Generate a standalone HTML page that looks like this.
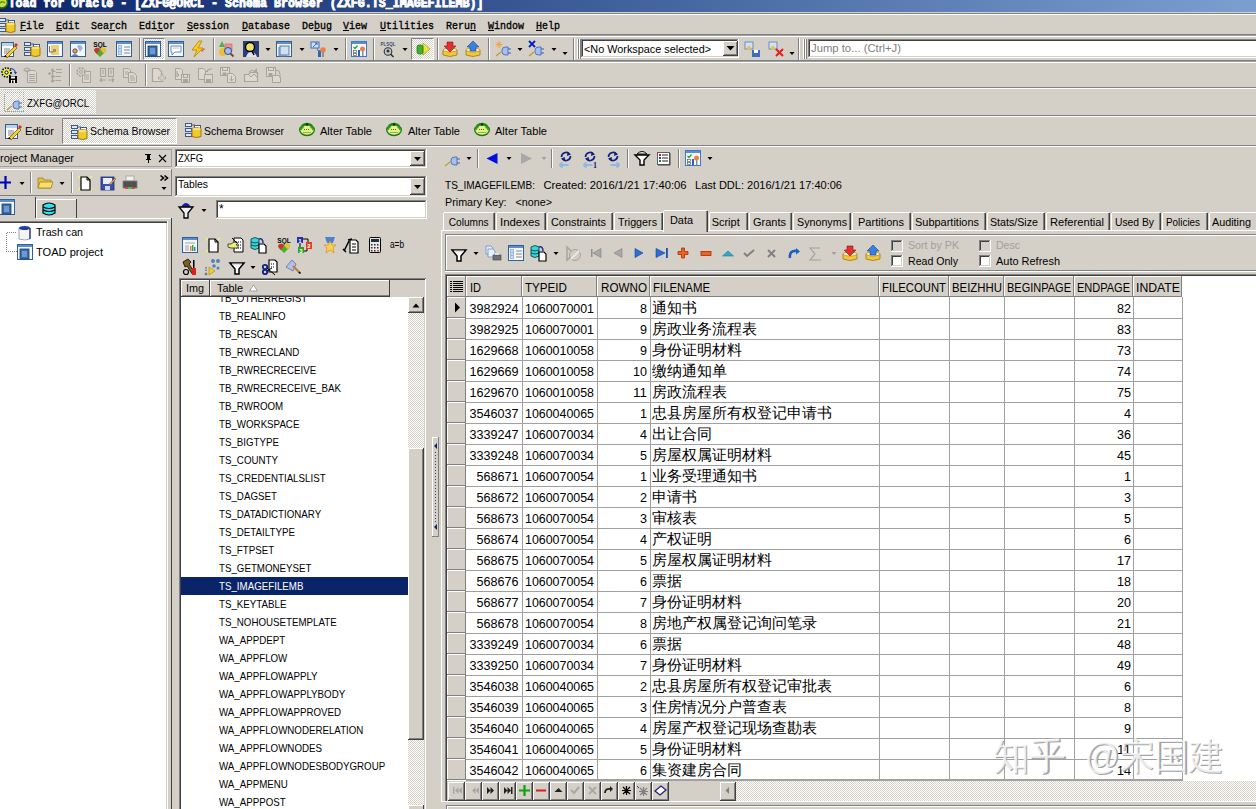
<!DOCTYPE html><html><head><meta charset="utf-8"><style>
*{box-sizing:border-box;margin:0;padding:0}
html,body{width:1256px;height:809px;overflow:hidden;background:#d4d0c8;font-family:"Liberation Sans",sans-serif;font-size:11px;color:#000}
.a{position:absolute}
.hl{position:absolute;height:1px}
.vl{position:absolute;width:1px}
.chk{background-color:#fff;background-image:linear-gradient(45deg,#d4d0c8 25%,transparent 25%,transparent 75%,#d4d0c8 75%),linear-gradient(45deg,#d4d0c8 25%,transparent 25%,transparent 75%,#d4d0c8 75%);background-size:2px 2px;background-position:0 0,1px 1px}
#ov{position:absolute;left:0;top:0}
text{font-family:"Liberation Sans",sans-serif;white-space:pre}
</style></head><body><div class="a" style="left:0px;top:0px;width:1256px;height:12px;background:linear-gradient(90deg,#0a246a 0%,#7c9fd0 100%)"></div>
<div class="a" style="left:0px;top:12px;width:1256px;height:1px;background:#d4d0c8"></div>
<div class="a" style="left:0px;top:13px;width:1256px;height:1px;background:#808080"></div>
<div class="a" style="left:0px;top:14px;width:1256px;height:1px;background:#fff"></div>
<div class="a" style="left:0px;top:34px;width:1256px;height:1px;background:#808080"></div>
<div class="a" style="left:0px;top:35px;width:1256px;height:1px;background:#a0a0a0"></div>
<div class="a" style="left:0px;top:36px;width:1256px;height:1px;background:#fff"></div>
<div class="a" style="left:20px;top:30px;width:6px;height:1px;background:#000"></div>
<div class="a" style="left:56px;top:30px;width:6px;height:1px;background:#000"></div>
<div class="a" style="left:109px;top:30px;width:6px;height:1px;background:#000"></div>
<div class="a" style="left:157px;top:30px;width:6px;height:1px;background:#000"></div>
<div class="a" style="left:187px;top:30px;width:6px;height:1px;background:#000"></div>
<div class="a" style="left:242px;top:30px;width:6px;height:1px;background:#000"></div>
<div class="a" style="left:314px;top:30px;width:6px;height:1px;background:#000"></div>
<div class="a" style="left:343px;top:30px;width:6px;height:1px;background:#000"></div>
<div class="a" style="left:380px;top:30px;width:6px;height:1px;background:#000"></div>
<div class="a" style="left:470px;top:30px;width:6px;height:1px;background:#000"></div>
<div class="a" style="left:488px;top:30px;width:6px;height:1px;background:#000"></div>
<div class="a" style="left:536px;top:30px;width:6px;height:1px;background:#000"></div>
<div class="a" style="left:0px;top:60px;width:1256px;height:1px;background:#808080"></div>
<div class="a" style="left:0px;top:61px;width:1256px;height:1px;background:#a0a0a0"></div>
<div class="a" style="left:0px;top:62px;width:1256px;height:1px;background:#fff"></div>
<div class="a" style="left:0px;top:87px;width:1256px;height:1px;background:#808080"></div>
<div class="a" style="left:0px;top:88px;width:1256px;height:1px;background:#fff"></div>
<div class="a chk" style="left:0px;top:90px;width:96px;height:24px;"></div>
<div class="a" style="left:0px;top:115px;width:1256px;height:1px;background:#808080"></div>
<div class="a" style="left:0px;top:116px;width:1256px;height:1px;background:#fff"></div>
<div class="a chk" style="left:62px;top:118px;width:115px;height:26px;border-left:1px solid #808080;border-top:1px solid #808080;border-right:1px solid #fff;border-bottom:1px solid #fff"></div>
<div class="a" style="left:0px;top:145px;width:1256px;height:1px;background:#808080"></div>
<div class="a" style="left:0px;top:146px;width:1256px;height:1px;background:#fff"></div>
<div class="a" style="left:-1px;top:149px;width:173px;height:1px;background:#a0a0a0"></div>
<div class="a" style="left:-1px;top:149px;width:1px;height:18px;background:#a0a0a0"></div>
<div class="a" style="left:-1px;top:166px;width:173px;height:1px;background:#a0a0a0"></div>
<div class="a" style="left:171px;top:149px;width:1px;height:18px;background:#a0a0a0"></div>
<div class="a" style="left:-1px;top:169px;width:173px;height:1px;background:#fff"></div>
<div class="a" style="left:-1px;top:169px;width:1px;height:27px;background:#fff"></div>
<div class="a" style="left:-1px;top:195px;width:173px;height:1px;background:#808080"></div>
<div class="a" style="left:171px;top:169px;width:1px;height:27px;background:#808080"></div>
<div class="a" style="left:30px;top:172px;width:1px;height:21px;background:#808080"></div>
<div class="a" style="left:31px;top:172px;width:1px;height:21px;background:#fff"></div>
<div class="a" style="left:71px;top:172px;width:1px;height:21px;background:#808080"></div>
<div class="a" style="left:72px;top:172px;width:1px;height:21px;background:#fff"></div>
<div class="a" style="left:0px;top:197px;width:36px;height:24px;background:#d4d0c8"></div>
<div class="a" style="left:35px;top:197px;width:1px;height:21px;background:#404040"></div>
<div class="a" style="left:36px;top:199px;width:41px;height:1px;background:#fff"></div>
<div class="a" style="left:36px;top:199px;width:1px;height:20px;background:#fff"></div>
<div class="a" style="left:36px;top:218px;width:41px;height:1px;background:#404040"></div>
<div class="a" style="left:76px;top:199px;width:1px;height:20px;background:#404040"></div>
<div class="a" style="left:36px;top:218px;width:136px;height:1px;background:#fff"></div>
<div class="a" style="left:171px;top:218px;width:1px;height:591px;background:#404040"></div>
<div class="a" style="left:0px;top:221px;width:167px;height:1px;background:#808080"></div>
<div class="a" style="left:0px;top:222px;width:167px;height:1px;background:#404040"></div>
<div class="a" style="left:0px;top:223px;width:166px;height:586px;background:#fff"></div>
<div class="a" style="left:167px;top:221px;width:1px;height:588px;background:#fff"></div>
<div class="a" style="left:175px;top:149px;width:252px;height:19px;background:#fff"></div>
<div class="a" style="left:175px;top:149px;width:252px;height:1px;background:#808080"></div>
<div class="a" style="left:175px;top:149px;width:1px;height:19px;background:#808080"></div>
<div class="a" style="left:176px;top:150px;width:250px;height:1px;background:#404040"></div>
<div class="a" style="left:176px;top:150px;width:1px;height:17px;background:#404040"></div>
<div class="a" style="left:175px;top:167px;width:252px;height:1px;background:#fff"></div>
<div class="a" style="left:426px;top:149px;width:1px;height:19px;background:#fff"></div>
<div class="a" style="left:176px;top:166px;width:250px;height:1px;background:#d4d0c8"></div>
<div class="a" style="left:425px;top:150px;width:1px;height:17px;background:#d4d0c8"></div>
<div class="a" style="left:175px;top:176px;width:252px;height:21px;background:#fff"></div>
<div class="a" style="left:175px;top:176px;width:252px;height:1px;background:#808080"></div>
<div class="a" style="left:175px;top:176px;width:1px;height:21px;background:#808080"></div>
<div class="a" style="left:176px;top:177px;width:250px;height:1px;background:#404040"></div>
<div class="a" style="left:176px;top:177px;width:1px;height:19px;background:#404040"></div>
<div class="a" style="left:175px;top:196px;width:252px;height:1px;background:#fff"></div>
<div class="a" style="left:426px;top:176px;width:1px;height:21px;background:#fff"></div>
<div class="a" style="left:176px;top:195px;width:250px;height:1px;background:#d4d0c8"></div>
<div class="a" style="left:425px;top:177px;width:1px;height:19px;background:#d4d0c8"></div>
<div class="a" style="left:410px;top:151px;width:15px;height:15px;background:#d4d0c8"></div>
<div class="a" style="left:410px;top:151px;width:15px;height:1px;background:#fff"></div>
<div class="a" style="left:410px;top:151px;width:1px;height:15px;background:#fff"></div>
<div class="a" style="left:410px;top:165px;width:15px;height:1px;background:#404040"></div>
<div class="a" style="left:424px;top:151px;width:1px;height:15px;background:#404040"></div>
<div class="a" style="left:411px;top:164px;width:13px;height:1px;background:#808080"></div>
<div class="a" style="left:423px;top:152px;width:1px;height:13px;background:#808080"></div>
<div class="a" style="left:410px;top:178px;width:15px;height:17px;background:#d4d0c8"></div>
<div class="a" style="left:410px;top:178px;width:15px;height:1px;background:#fff"></div>
<div class="a" style="left:410px;top:178px;width:1px;height:17px;background:#fff"></div>
<div class="a" style="left:410px;top:194px;width:15px;height:1px;background:#404040"></div>
<div class="a" style="left:424px;top:178px;width:1px;height:17px;background:#404040"></div>
<div class="a" style="left:411px;top:193px;width:13px;height:1px;background:#808080"></div>
<div class="a" style="left:423px;top:179px;width:1px;height:15px;background:#808080"></div>
<div class="a" style="left:216px;top:200px;width:211px;height:19px;background:#fff"></div>
<div class="a" style="left:216px;top:200px;width:211px;height:1px;background:#808080"></div>
<div class="a" style="left:216px;top:200px;width:1px;height:19px;background:#808080"></div>
<div class="a" style="left:217px;top:201px;width:209px;height:1px;background:#404040"></div>
<div class="a" style="left:217px;top:201px;width:1px;height:17px;background:#404040"></div>
<div class="a" style="left:216px;top:218px;width:211px;height:1px;background:#fff"></div>
<div class="a" style="left:426px;top:200px;width:1px;height:19px;background:#fff"></div>
<div class="a" style="left:217px;top:217px;width:209px;height:1px;background:#d4d0c8"></div>
<div class="a" style="left:425px;top:201px;width:1px;height:17px;background:#d4d0c8"></div>
<div class="a" style="left:179px;top:278px;width:247px;height:1px;background:#808080"></div>
<div class="a" style="left:179px;top:278px;width:1px;height:531px;background:#808080"></div>
<div class="a" style="left:180px;top:279px;width:1px;height:530px;background:#404040"></div>
<div class="a" style="left:180px;top:279px;width:246px;height:1px;background:#404040"></div>
<div class="a" style="left:181px;top:280px;width:245px;height:17px;background:#d4d0c8"></div>
<div class="a" style="left:181px;top:280px;width:29px;height:1px;background:#fff"></div>
<div class="a" style="left:181px;top:280px;width:1px;height:17px;background:#fff"></div>
<div class="a" style="left:181px;top:296px;width:29px;height:1px;background:#404040"></div>
<div class="a" style="left:209px;top:280px;width:1px;height:17px;background:#404040"></div>
<div class="a" style="left:182px;top:295px;width:27px;height:1px;background:#808080"></div>
<div class="a" style="left:210px;top:280px;width:180px;height:1px;background:#fff"></div>
<div class="a" style="left:210px;top:280px;width:1px;height:17px;background:#fff"></div>
<div class="a" style="left:210px;top:296px;width:180px;height:1px;background:#404040"></div>
<div class="a" style="left:389px;top:280px;width:1px;height:17px;background:#404040"></div>
<div class="a" style="left:211px;top:295px;width:178px;height:1px;background:#808080"></div>
<div class="a" style="left:181px;top:297px;width:227px;height:512px;background:#fff"></div>
<div class="a" style="left:181px;top:577px;width:227px;height:18px;background:#0a246a"></div>
<div class="a chk" style="left:408px;top:313px;width:16px;height:496px;"></div>
<div class="a" style="left:408px;top:297px;width:16px;height:16px;background:#d4d0c8"></div>
<div class="a" style="left:408px;top:297px;width:16px;height:1px;background:#fff"></div>
<div class="a" style="left:408px;top:297px;width:1px;height:16px;background:#fff"></div>
<div class="a" style="left:408px;top:312px;width:16px;height:1px;background:#404040"></div>
<div class="a" style="left:423px;top:297px;width:1px;height:16px;background:#404040"></div>
<div class="a" style="left:409px;top:311px;width:14px;height:1px;background:#808080"></div>
<div class="a" style="left:422px;top:298px;width:1px;height:14px;background:#808080"></div>
<div class="a" style="left:408px;top:448px;width:16px;height:292px;background:#d4d0c8"></div>
<div class="a" style="left:408px;top:448px;width:16px;height:1px;background:#fff"></div>
<div class="a" style="left:408px;top:448px;width:1px;height:292px;background:#fff"></div>
<div class="a" style="left:408px;top:739px;width:16px;height:1px;background:#404040"></div>
<div class="a" style="left:423px;top:448px;width:1px;height:292px;background:#404040"></div>
<div class="a" style="left:409px;top:738px;width:14px;height:1px;background:#808080"></div>
<div class="a" style="left:422px;top:449px;width:1px;height:290px;background:#808080"></div>
<div class="a" style="left:425px;top:279px;width:1px;height:530px;background:#fff"></div>
<div class="a" style="left:432px;top:437px;width:7px;height:1px;background:#fff"></div>
<div class="a" style="left:432px;top:437px;width:1px;height:100px;background:#fff"></div>
<div class="a" style="left:432px;top:536px;width:7px;height:1px;background:#808080"></div>
<div class="a" style="left:438px;top:437px;width:1px;height:100px;background:#808080"></div>
<div class="a" style="left:477px;top:149px;width:1px;height:19px;background:#808080"></div>
<div class="a" style="left:478px;top:149px;width:1px;height:19px;background:#fff"></div>
<div class="a" style="left:551px;top:149px;width:1px;height:19px;background:#808080"></div>
<div class="a" style="left:552px;top:149px;width:1px;height:19px;background:#fff"></div>
<div class="a" style="left:627px;top:149px;width:1px;height:19px;background:#808080"></div>
<div class="a" style="left:628px;top:149px;width:1px;height:19px;background:#fff"></div>
<div class="a" style="left:678px;top:149px;width:1px;height:19px;background:#808080"></div>
<div class="a" style="left:679px;top:149px;width:1px;height:19px;background:#fff"></div>
<div class="a" style="left:444px;top:212px;width:50px;height:1px;background:#fff"></div>
<div class="a" style="left:443px;top:213px;width:1px;height:17px;background:#fff"></div>
<div class="a" style="left:494px;top:213px;width:1px;height:17px;background:#404040"></div>
<div class="a" style="left:493px;top:213px;width:1px;height:17px;background:#808080"></div>
<div class="a" style="left:497px;top:212px;width:48px;height:1px;background:#fff"></div>
<div class="a" style="left:496px;top:213px;width:1px;height:17px;background:#fff"></div>
<div class="a" style="left:545px;top:213px;width:1px;height:17px;background:#404040"></div>
<div class="a" style="left:544px;top:213px;width:1px;height:17px;background:#808080"></div>
<div class="a" style="left:548px;top:212px;width:64px;height:1px;background:#fff"></div>
<div class="a" style="left:547px;top:213px;width:1px;height:17px;background:#fff"></div>
<div class="a" style="left:612px;top:213px;width:1px;height:17px;background:#404040"></div>
<div class="a" style="left:611px;top:213px;width:1px;height:17px;background:#808080"></div>
<div class="a" style="left:615px;top:212px;width:47px;height:1px;background:#fff"></div>
<div class="a" style="left:614px;top:213px;width:1px;height:17px;background:#fff"></div>
<div class="a" style="left:662px;top:213px;width:1px;height:17px;background:#404040"></div>
<div class="a" style="left:661px;top:213px;width:1px;height:17px;background:#808080"></div>
<div class="a" style="left:663px;top:210px;width:45px;height:22px;background:#d4d0c8"></div>
<div class="a" style="left:664px;top:210px;width:43px;height:1px;background:#fff"></div>
<div class="a" style="left:663px;top:211px;width:1px;height:21px;background:#fff"></div>
<div class="a" style="left:707px;top:211px;width:1px;height:21px;background:#404040"></div>
<div class="a" style="left:706px;top:211px;width:1px;height:21px;background:#808080"></div>
<div class="a" style="left:710px;top:212px;width:37px;height:1px;background:#fff"></div>
<div class="a" style="left:709px;top:213px;width:1px;height:17px;background:#fff"></div>
<div class="a" style="left:747px;top:213px;width:1px;height:17px;background:#404040"></div>
<div class="a" style="left:746px;top:213px;width:1px;height:17px;background:#808080"></div>
<div class="a" style="left:750px;top:212px;width:41px;height:1px;background:#fff"></div>
<div class="a" style="left:749px;top:213px;width:1px;height:17px;background:#fff"></div>
<div class="a" style="left:791px;top:213px;width:1px;height:17px;background:#404040"></div>
<div class="a" style="left:790px;top:213px;width:1px;height:17px;background:#808080"></div>
<div class="a" style="left:794px;top:212px;width:56px;height:1px;background:#fff"></div>
<div class="a" style="left:793px;top:213px;width:1px;height:17px;background:#fff"></div>
<div class="a" style="left:850px;top:213px;width:1px;height:17px;background:#404040"></div>
<div class="a" style="left:849px;top:213px;width:1px;height:17px;background:#808080"></div>
<div class="a" style="left:853px;top:212px;width:57px;height:1px;background:#fff"></div>
<div class="a" style="left:852px;top:213px;width:1px;height:17px;background:#fff"></div>
<div class="a" style="left:910px;top:213px;width:1px;height:17px;background:#404040"></div>
<div class="a" style="left:909px;top:213px;width:1px;height:17px;background:#808080"></div>
<div class="a" style="left:913px;top:212px;width:72px;height:1px;background:#fff"></div>
<div class="a" style="left:912px;top:213px;width:1px;height:17px;background:#fff"></div>
<div class="a" style="left:985px;top:213px;width:1px;height:17px;background:#404040"></div>
<div class="a" style="left:984px;top:213px;width:1px;height:17px;background:#808080"></div>
<div class="a" style="left:988px;top:212px;width:56px;height:1px;background:#fff"></div>
<div class="a" style="left:987px;top:213px;width:1px;height:17px;background:#fff"></div>
<div class="a" style="left:1044px;top:213px;width:1px;height:17px;background:#404040"></div>
<div class="a" style="left:1043px;top:213px;width:1px;height:17px;background:#808080"></div>
<div class="a" style="left:1047px;top:212px;width:62px;height:1px;background:#fff"></div>
<div class="a" style="left:1046px;top:213px;width:1px;height:17px;background:#fff"></div>
<div class="a" style="left:1109px;top:213px;width:1px;height:17px;background:#404040"></div>
<div class="a" style="left:1108px;top:213px;width:1px;height:17px;background:#808080"></div>
<div class="a" style="left:1112px;top:212px;width:48px;height:1px;background:#fff"></div>
<div class="a" style="left:1111px;top:213px;width:1px;height:17px;background:#fff"></div>
<div class="a" style="left:1160px;top:213px;width:1px;height:17px;background:#404040"></div>
<div class="a" style="left:1159px;top:213px;width:1px;height:17px;background:#808080"></div>
<div class="a" style="left:1163px;top:212px;width:44px;height:1px;background:#fff"></div>
<div class="a" style="left:1162px;top:213px;width:1px;height:17px;background:#fff"></div>
<div class="a" style="left:1207px;top:213px;width:1px;height:17px;background:#404040"></div>
<div class="a" style="left:1206px;top:213px;width:1px;height:17px;background:#808080"></div>
<div class="a" style="left:1210px;top:212px;width:46px;height:1px;background:#fff"></div>
<div class="a" style="left:1209px;top:213px;width:1px;height:17px;background:#fff"></div>
<div class="a" style="left:441px;top:230px;width:222px;height:1px;background:#fff"></div>
<div class="a" style="left:708px;top:230px;width:548px;height:1px;background:#fff"></div>
<div class="a" style="left:441px;top:230px;width:1px;height:579px;background:#fff"></div>
<div class="a" style="left:445px;top:234px;width:811px;height:1px;background:#808080"></div>
<div class="a" style="left:445px;top:234px;width:1px;height:37px;background:#808080"></div>
<div class="a" style="left:446px;top:235px;width:810px;height:1px;background:#fff"></div>
<div class="a" style="left:446px;top:235px;width:1px;height:36px;background:#fff"></div>
<div class="a" style="left:445px;top:271px;width:811px;height:1px;background:#fff"></div>
<div class="a" style="left:445px;top:270px;width:811px;height:1px;background:#808080"></div>
<div class="a" style="left:891px;top:240px;width:12px;height:12px;background:#d4d0c8"></div>
<div class="a" style="left:891px;top:240px;width:12px;height:1px;background:#808080"></div>
<div class="a" style="left:891px;top:240px;width:1px;height:12px;background:#808080"></div>
<div class="a" style="left:892px;top:241px;width:10px;height:1px;background:#404040"></div>
<div class="a" style="left:892px;top:241px;width:1px;height:10px;background:#404040"></div>
<div class="a" style="left:891px;top:251px;width:12px;height:1px;background:#fff"></div>
<div class="a" style="left:902px;top:240px;width:1px;height:12px;background:#fff"></div>
<div class="a" style="left:892px;top:250px;width:10px;height:1px;background:#d4d0c8"></div>
<div class="a" style="left:901px;top:241px;width:1px;height:10px;background:#d4d0c8"></div>
<div class="a" style="left:891px;top:255px;width:12px;height:12px;background:#fff"></div>
<div class="a" style="left:891px;top:255px;width:12px;height:1px;background:#808080"></div>
<div class="a" style="left:891px;top:255px;width:1px;height:12px;background:#808080"></div>
<div class="a" style="left:892px;top:256px;width:10px;height:1px;background:#404040"></div>
<div class="a" style="left:892px;top:256px;width:1px;height:10px;background:#404040"></div>
<div class="a" style="left:891px;top:266px;width:12px;height:1px;background:#fff"></div>
<div class="a" style="left:902px;top:255px;width:1px;height:12px;background:#fff"></div>
<div class="a" style="left:892px;top:265px;width:10px;height:1px;background:#d4d0c8"></div>
<div class="a" style="left:901px;top:256px;width:1px;height:10px;background:#d4d0c8"></div>
<div class="a" style="left:979px;top:240px;width:12px;height:12px;background:#d4d0c8"></div>
<div class="a" style="left:979px;top:240px;width:12px;height:1px;background:#808080"></div>
<div class="a" style="left:979px;top:240px;width:1px;height:12px;background:#808080"></div>
<div class="a" style="left:980px;top:241px;width:10px;height:1px;background:#404040"></div>
<div class="a" style="left:980px;top:241px;width:1px;height:10px;background:#404040"></div>
<div class="a" style="left:979px;top:251px;width:12px;height:1px;background:#fff"></div>
<div class="a" style="left:990px;top:240px;width:1px;height:12px;background:#fff"></div>
<div class="a" style="left:980px;top:250px;width:10px;height:1px;background:#d4d0c8"></div>
<div class="a" style="left:989px;top:241px;width:1px;height:10px;background:#d4d0c8"></div>
<div class="a" style="left:979px;top:255px;width:12px;height:12px;background:#fff"></div>
<div class="a" style="left:979px;top:255px;width:12px;height:1px;background:#808080"></div>
<div class="a" style="left:979px;top:255px;width:1px;height:12px;background:#808080"></div>
<div class="a" style="left:980px;top:256px;width:10px;height:1px;background:#404040"></div>
<div class="a" style="left:980px;top:256px;width:1px;height:10px;background:#404040"></div>
<div class="a" style="left:979px;top:266px;width:12px;height:1px;background:#fff"></div>
<div class="a" style="left:990px;top:255px;width:1px;height:12px;background:#fff"></div>
<div class="a" style="left:980px;top:265px;width:10px;height:1px;background:#d4d0c8"></div>
<div class="a" style="left:989px;top:256px;width:1px;height:10px;background:#d4d0c8"></div>
<div class="a" style="left:445px;top:274px;width:811px;height:1px;background:#808080"></div>
<div class="a" style="left:445px;top:274px;width:1px;height:535px;background:#808080"></div>
<div class="a" style="left:446px;top:275px;width:810px;height:1px;background:#404040"></div>
<div class="a" style="left:446px;top:275px;width:1px;height:534px;background:#404040"></div>
<div class="a" style="left:447px;top:276px;width:809px;height:505px;background:#fff"></div>
<div class="a" style="left:447px;top:276px;width:735px;height:21px;background:#d4d0c8"></div>
<div class="a" style="left:447px;top:276px;width:19px;height:1px;background:#fff"></div>
<div class="a" style="left:447px;top:276px;width:1px;height:21px;background:#fff"></div>
<div class="a" style="left:447px;top:296px;width:19px;height:1px;background:#808080"></div>
<div class="a" style="left:465px;top:276px;width:1px;height:21px;background:#808080"></div>
<div class="a" style="left:466px;top:276px;width:56px;height:1px;background:#fff"></div>
<div class="a" style="left:466px;top:276px;width:1px;height:21px;background:#fff"></div>
<div class="a" style="left:466px;top:296px;width:56px;height:1px;background:#808080"></div>
<div class="a" style="left:521px;top:276px;width:1px;height:21px;background:#808080"></div>
<div class="a" style="left:522px;top:276px;width:75px;height:1px;background:#fff"></div>
<div class="a" style="left:522px;top:276px;width:1px;height:21px;background:#fff"></div>
<div class="a" style="left:522px;top:296px;width:75px;height:1px;background:#808080"></div>
<div class="a" style="left:596px;top:276px;width:1px;height:21px;background:#808080"></div>
<div class="a" style="left:597px;top:276px;width:53px;height:1px;background:#fff"></div>
<div class="a" style="left:597px;top:276px;width:1px;height:21px;background:#fff"></div>
<div class="a" style="left:597px;top:296px;width:53px;height:1px;background:#808080"></div>
<div class="a" style="left:649px;top:276px;width:1px;height:21px;background:#808080"></div>
<div class="a" style="left:650px;top:276px;width:229px;height:1px;background:#fff"></div>
<div class="a" style="left:650px;top:276px;width:1px;height:21px;background:#fff"></div>
<div class="a" style="left:650px;top:296px;width:229px;height:1px;background:#808080"></div>
<div class="a" style="left:878px;top:276px;width:1px;height:21px;background:#808080"></div>
<div class="a" style="left:879px;top:276px;width:70px;height:1px;background:#fff"></div>
<div class="a" style="left:879px;top:276px;width:1px;height:21px;background:#fff"></div>
<div class="a" style="left:879px;top:296px;width:70px;height:1px;background:#808080"></div>
<div class="a" style="left:948px;top:276px;width:1px;height:21px;background:#808080"></div>
<div class="a" style="left:949px;top:276px;width:55px;height:1px;background:#fff"></div>
<div class="a" style="left:949px;top:276px;width:1px;height:21px;background:#fff"></div>
<div class="a" style="left:949px;top:296px;width:55px;height:1px;background:#808080"></div>
<div class="a" style="left:1003px;top:276px;width:1px;height:21px;background:#808080"></div>
<div class="a" style="left:1004px;top:276px;width:70px;height:1px;background:#fff"></div>
<div class="a" style="left:1004px;top:276px;width:1px;height:21px;background:#fff"></div>
<div class="a" style="left:1004px;top:296px;width:70px;height:1px;background:#808080"></div>
<div class="a" style="left:1073px;top:276px;width:1px;height:21px;background:#808080"></div>
<div class="a" style="left:1074px;top:276px;width:59px;height:1px;background:#fff"></div>
<div class="a" style="left:1074px;top:276px;width:1px;height:21px;background:#fff"></div>
<div class="a" style="left:1074px;top:296px;width:59px;height:1px;background:#808080"></div>
<div class="a" style="left:1132px;top:276px;width:1px;height:21px;background:#808080"></div>
<div class="a" style="left:1133px;top:276px;width:49px;height:1px;background:#fff"></div>
<div class="a" style="left:1133px;top:276px;width:1px;height:21px;background:#fff"></div>
<div class="a" style="left:1133px;top:296px;width:49px;height:1px;background:#808080"></div>
<div class="a" style="left:1181px;top:276px;width:1px;height:21px;background:#808080"></div>
<div class="a" style="left:447px;top:297px;width:19px;height:21px;background:#d4d0c8"></div>
<div class="a" style="left:447px;top:297px;width:19px;height:1px;background:#fff"></div>
<div class="a" style="left:447px;top:297px;width:1px;height:21px;background:#fff"></div>
<div class="a" style="left:447px;top:317px;width:19px;height:1px;background:#808080"></div>
<div class="a" style="left:465px;top:297px;width:1px;height:21px;background:#808080"></div>
<div class="a" style="left:447px;top:318px;width:19px;height:21px;background:#d4d0c8"></div>
<div class="a" style="left:447px;top:318px;width:19px;height:1px;background:#fff"></div>
<div class="a" style="left:447px;top:318px;width:1px;height:21px;background:#fff"></div>
<div class="a" style="left:447px;top:338px;width:19px;height:1px;background:#808080"></div>
<div class="a" style="left:465px;top:318px;width:1px;height:21px;background:#808080"></div>
<div class="a" style="left:447px;top:339px;width:19px;height:21px;background:#d4d0c8"></div>
<div class="a" style="left:447px;top:339px;width:19px;height:1px;background:#fff"></div>
<div class="a" style="left:447px;top:339px;width:1px;height:21px;background:#fff"></div>
<div class="a" style="left:447px;top:359px;width:19px;height:1px;background:#808080"></div>
<div class="a" style="left:465px;top:339px;width:1px;height:21px;background:#808080"></div>
<div class="a" style="left:447px;top:360px;width:19px;height:21px;background:#d4d0c8"></div>
<div class="a" style="left:447px;top:360px;width:19px;height:1px;background:#fff"></div>
<div class="a" style="left:447px;top:360px;width:1px;height:21px;background:#fff"></div>
<div class="a" style="left:447px;top:380px;width:19px;height:1px;background:#808080"></div>
<div class="a" style="left:465px;top:360px;width:1px;height:21px;background:#808080"></div>
<div class="a" style="left:447px;top:381px;width:19px;height:21px;background:#d4d0c8"></div>
<div class="a" style="left:447px;top:381px;width:19px;height:1px;background:#fff"></div>
<div class="a" style="left:447px;top:381px;width:1px;height:21px;background:#fff"></div>
<div class="a" style="left:447px;top:401px;width:19px;height:1px;background:#808080"></div>
<div class="a" style="left:465px;top:381px;width:1px;height:21px;background:#808080"></div>
<div class="a" style="left:447px;top:402px;width:19px;height:21px;background:#d4d0c8"></div>
<div class="a" style="left:447px;top:402px;width:19px;height:1px;background:#fff"></div>
<div class="a" style="left:447px;top:402px;width:1px;height:21px;background:#fff"></div>
<div class="a" style="left:447px;top:422px;width:19px;height:1px;background:#808080"></div>
<div class="a" style="left:465px;top:402px;width:1px;height:21px;background:#808080"></div>
<div class="a" style="left:447px;top:423px;width:19px;height:21px;background:#d4d0c8"></div>
<div class="a" style="left:447px;top:423px;width:19px;height:1px;background:#fff"></div>
<div class="a" style="left:447px;top:423px;width:1px;height:21px;background:#fff"></div>
<div class="a" style="left:447px;top:443px;width:19px;height:1px;background:#808080"></div>
<div class="a" style="left:465px;top:423px;width:1px;height:21px;background:#808080"></div>
<div class="a" style="left:447px;top:444px;width:19px;height:21px;background:#d4d0c8"></div>
<div class="a" style="left:447px;top:444px;width:19px;height:1px;background:#fff"></div>
<div class="a" style="left:447px;top:444px;width:1px;height:21px;background:#fff"></div>
<div class="a" style="left:447px;top:464px;width:19px;height:1px;background:#808080"></div>
<div class="a" style="left:465px;top:444px;width:1px;height:21px;background:#808080"></div>
<div class="a" style="left:447px;top:465px;width:19px;height:21px;background:#d4d0c8"></div>
<div class="a" style="left:447px;top:465px;width:19px;height:1px;background:#fff"></div>
<div class="a" style="left:447px;top:465px;width:1px;height:21px;background:#fff"></div>
<div class="a" style="left:447px;top:485px;width:19px;height:1px;background:#808080"></div>
<div class="a" style="left:465px;top:465px;width:1px;height:21px;background:#808080"></div>
<div class="a" style="left:447px;top:486px;width:19px;height:21px;background:#d4d0c8"></div>
<div class="a" style="left:447px;top:486px;width:19px;height:1px;background:#fff"></div>
<div class="a" style="left:447px;top:486px;width:1px;height:21px;background:#fff"></div>
<div class="a" style="left:447px;top:506px;width:19px;height:1px;background:#808080"></div>
<div class="a" style="left:465px;top:486px;width:1px;height:21px;background:#808080"></div>
<div class="a" style="left:447px;top:507px;width:19px;height:21px;background:#d4d0c8"></div>
<div class="a" style="left:447px;top:507px;width:19px;height:1px;background:#fff"></div>
<div class="a" style="left:447px;top:507px;width:1px;height:21px;background:#fff"></div>
<div class="a" style="left:447px;top:527px;width:19px;height:1px;background:#808080"></div>
<div class="a" style="left:465px;top:507px;width:1px;height:21px;background:#808080"></div>
<div class="a" style="left:447px;top:528px;width:19px;height:21px;background:#d4d0c8"></div>
<div class="a" style="left:447px;top:528px;width:19px;height:1px;background:#fff"></div>
<div class="a" style="left:447px;top:528px;width:1px;height:21px;background:#fff"></div>
<div class="a" style="left:447px;top:548px;width:19px;height:1px;background:#808080"></div>
<div class="a" style="left:465px;top:528px;width:1px;height:21px;background:#808080"></div>
<div class="a" style="left:447px;top:549px;width:19px;height:21px;background:#d4d0c8"></div>
<div class="a" style="left:447px;top:549px;width:19px;height:1px;background:#fff"></div>
<div class="a" style="left:447px;top:549px;width:1px;height:21px;background:#fff"></div>
<div class="a" style="left:447px;top:569px;width:19px;height:1px;background:#808080"></div>
<div class="a" style="left:465px;top:549px;width:1px;height:21px;background:#808080"></div>
<div class="a" style="left:447px;top:570px;width:19px;height:21px;background:#d4d0c8"></div>
<div class="a" style="left:447px;top:570px;width:19px;height:1px;background:#fff"></div>
<div class="a" style="left:447px;top:570px;width:1px;height:21px;background:#fff"></div>
<div class="a" style="left:447px;top:590px;width:19px;height:1px;background:#808080"></div>
<div class="a" style="left:465px;top:570px;width:1px;height:21px;background:#808080"></div>
<div class="a" style="left:447px;top:591px;width:19px;height:21px;background:#d4d0c8"></div>
<div class="a" style="left:447px;top:591px;width:19px;height:1px;background:#fff"></div>
<div class="a" style="left:447px;top:591px;width:1px;height:21px;background:#fff"></div>
<div class="a" style="left:447px;top:611px;width:19px;height:1px;background:#808080"></div>
<div class="a" style="left:465px;top:591px;width:1px;height:21px;background:#808080"></div>
<div class="a" style="left:447px;top:612px;width:19px;height:21px;background:#d4d0c8"></div>
<div class="a" style="left:447px;top:612px;width:19px;height:1px;background:#fff"></div>
<div class="a" style="left:447px;top:612px;width:1px;height:21px;background:#fff"></div>
<div class="a" style="left:447px;top:632px;width:19px;height:1px;background:#808080"></div>
<div class="a" style="left:465px;top:612px;width:1px;height:21px;background:#808080"></div>
<div class="a" style="left:447px;top:633px;width:19px;height:21px;background:#d4d0c8"></div>
<div class="a" style="left:447px;top:633px;width:19px;height:1px;background:#fff"></div>
<div class="a" style="left:447px;top:633px;width:1px;height:21px;background:#fff"></div>
<div class="a" style="left:447px;top:653px;width:19px;height:1px;background:#808080"></div>
<div class="a" style="left:465px;top:633px;width:1px;height:21px;background:#808080"></div>
<div class="a" style="left:447px;top:654px;width:19px;height:21px;background:#d4d0c8"></div>
<div class="a" style="left:447px;top:654px;width:19px;height:1px;background:#fff"></div>
<div class="a" style="left:447px;top:654px;width:1px;height:21px;background:#fff"></div>
<div class="a" style="left:447px;top:674px;width:19px;height:1px;background:#808080"></div>
<div class="a" style="left:465px;top:654px;width:1px;height:21px;background:#808080"></div>
<div class="a" style="left:447px;top:675px;width:19px;height:21px;background:#d4d0c8"></div>
<div class="a" style="left:447px;top:675px;width:19px;height:1px;background:#fff"></div>
<div class="a" style="left:447px;top:675px;width:1px;height:21px;background:#fff"></div>
<div class="a" style="left:447px;top:695px;width:19px;height:1px;background:#808080"></div>
<div class="a" style="left:465px;top:675px;width:1px;height:21px;background:#808080"></div>
<div class="a" style="left:447px;top:696px;width:19px;height:21px;background:#d4d0c8"></div>
<div class="a" style="left:447px;top:696px;width:19px;height:1px;background:#fff"></div>
<div class="a" style="left:447px;top:696px;width:1px;height:21px;background:#fff"></div>
<div class="a" style="left:447px;top:716px;width:19px;height:1px;background:#808080"></div>
<div class="a" style="left:465px;top:696px;width:1px;height:21px;background:#808080"></div>
<div class="a" style="left:447px;top:717px;width:19px;height:21px;background:#d4d0c8"></div>
<div class="a" style="left:447px;top:717px;width:19px;height:1px;background:#fff"></div>
<div class="a" style="left:447px;top:717px;width:1px;height:21px;background:#fff"></div>
<div class="a" style="left:447px;top:737px;width:19px;height:1px;background:#808080"></div>
<div class="a" style="left:465px;top:717px;width:1px;height:21px;background:#808080"></div>
<div class="a" style="left:447px;top:738px;width:19px;height:21px;background:#d4d0c8"></div>
<div class="a" style="left:447px;top:738px;width:19px;height:1px;background:#fff"></div>
<div class="a" style="left:447px;top:738px;width:1px;height:21px;background:#fff"></div>
<div class="a" style="left:447px;top:758px;width:19px;height:1px;background:#808080"></div>
<div class="a" style="left:465px;top:738px;width:1px;height:21px;background:#808080"></div>
<div class="a" style="left:447px;top:759px;width:19px;height:21px;background:#d4d0c8"></div>
<div class="a" style="left:447px;top:759px;width:19px;height:1px;background:#fff"></div>
<div class="a" style="left:447px;top:759px;width:1px;height:21px;background:#fff"></div>
<div class="a" style="left:447px;top:779px;width:19px;height:1px;background:#808080"></div>
<div class="a" style="left:465px;top:759px;width:1px;height:21px;background:#808080"></div>
<div class="a" style="left:466px;top:318px;width:716px;height:1px;background:#a0a0a0"></div>
<div class="a" style="left:466px;top:339px;width:716px;height:1px;background:#a0a0a0"></div>
<div class="a" style="left:466px;top:360px;width:716px;height:1px;background:#a0a0a0"></div>
<div class="a" style="left:466px;top:381px;width:716px;height:1px;background:#a0a0a0"></div>
<div class="a" style="left:466px;top:402px;width:716px;height:1px;background:#a0a0a0"></div>
<div class="a" style="left:466px;top:423px;width:716px;height:1px;background:#a0a0a0"></div>
<div class="a" style="left:466px;top:444px;width:716px;height:1px;background:#a0a0a0"></div>
<div class="a" style="left:466px;top:465px;width:716px;height:1px;background:#a0a0a0"></div>
<div class="a" style="left:466px;top:486px;width:716px;height:1px;background:#a0a0a0"></div>
<div class="a" style="left:466px;top:507px;width:716px;height:1px;background:#a0a0a0"></div>
<div class="a" style="left:466px;top:528px;width:716px;height:1px;background:#a0a0a0"></div>
<div class="a" style="left:466px;top:549px;width:716px;height:1px;background:#a0a0a0"></div>
<div class="a" style="left:466px;top:570px;width:716px;height:1px;background:#a0a0a0"></div>
<div class="a" style="left:466px;top:591px;width:716px;height:1px;background:#a0a0a0"></div>
<div class="a" style="left:466px;top:612px;width:716px;height:1px;background:#a0a0a0"></div>
<div class="a" style="left:466px;top:633px;width:716px;height:1px;background:#a0a0a0"></div>
<div class="a" style="left:466px;top:654px;width:716px;height:1px;background:#a0a0a0"></div>
<div class="a" style="left:466px;top:675px;width:716px;height:1px;background:#a0a0a0"></div>
<div class="a" style="left:466px;top:696px;width:716px;height:1px;background:#a0a0a0"></div>
<div class="a" style="left:466px;top:717px;width:716px;height:1px;background:#a0a0a0"></div>
<div class="a" style="left:466px;top:738px;width:716px;height:1px;background:#a0a0a0"></div>
<div class="a" style="left:466px;top:759px;width:716px;height:1px;background:#a0a0a0"></div>
<div class="a" style="left:466px;top:780px;width:716px;height:1px;background:#a0a0a0"></div>
<div class="a" style="left:522px;top:297px;width:1px;height:484px;background:#a0a0a0"></div>
<div class="a" style="left:597px;top:297px;width:1px;height:484px;background:#a0a0a0"></div>
<div class="a" style="left:650px;top:297px;width:1px;height:484px;background:#a0a0a0"></div>
<div class="a" style="left:879px;top:297px;width:1px;height:484px;background:#a0a0a0"></div>
<div class="a" style="left:949px;top:297px;width:1px;height:484px;background:#a0a0a0"></div>
<div class="a" style="left:1004px;top:297px;width:1px;height:484px;background:#a0a0a0"></div>
<div class="a" style="left:1074px;top:297px;width:1px;height:484px;background:#a0a0a0"></div>
<div class="a" style="left:1133px;top:297px;width:1px;height:484px;background:#a0a0a0"></div>
<div class="a" style="left:1182px;top:297px;width:1px;height:484px;background:#a0a0a0"></div>
<div class="a" style="left:466px;top:779px;width:716px;height:1px;background:#a0a0a0"></div>
<div class="a" style="left:408px;top:805px;width:16px;height:4px;background:#d4d0c8"></div>
<div class="a" style="left:408px;top:805px;width:16px;height:1px;background:#fff"></div>
<div class="a" style="left:408px;top:805px;width:1px;height:4px;background:#fff"></div>
<div class="a" style="left:423px;top:805px;width:1px;height:4px;background:#404040"></div>
<div class="a" style="left:447px;top:781px;width:809px;height:20px;background:#d4d0c8"></div>
<div class="a" style="left:448px;top:782px;width:17px;height:1px;background:#fff"></div>
<div class="a" style="left:448px;top:782px;width:1px;height:19px;background:#fff"></div>
<div class="a" style="left:448px;top:800px;width:17px;height:1px;background:#404040"></div>
<div class="a" style="left:464px;top:782px;width:1px;height:19px;background:#404040"></div>
<div class="a" style="left:449px;top:799px;width:15px;height:1px;background:#808080"></div>
<div class="a" style="left:463px;top:783px;width:1px;height:16px;background:#808080"></div>
<div class="a" style="left:465px;top:782px;width:17px;height:1px;background:#fff"></div>
<div class="a" style="left:465px;top:782px;width:1px;height:19px;background:#fff"></div>
<div class="a" style="left:465px;top:800px;width:17px;height:1px;background:#404040"></div>
<div class="a" style="left:481px;top:782px;width:1px;height:19px;background:#404040"></div>
<div class="a" style="left:466px;top:799px;width:15px;height:1px;background:#808080"></div>
<div class="a" style="left:480px;top:783px;width:1px;height:16px;background:#808080"></div>
<div class="a" style="left:482px;top:782px;width:17px;height:1px;background:#fff"></div>
<div class="a" style="left:482px;top:782px;width:1px;height:19px;background:#fff"></div>
<div class="a" style="left:482px;top:800px;width:17px;height:1px;background:#404040"></div>
<div class="a" style="left:498px;top:782px;width:1px;height:19px;background:#404040"></div>
<div class="a" style="left:483px;top:799px;width:15px;height:1px;background:#808080"></div>
<div class="a" style="left:497px;top:783px;width:1px;height:16px;background:#808080"></div>
<div class="a" style="left:499px;top:782px;width:17px;height:1px;background:#fff"></div>
<div class="a" style="left:499px;top:782px;width:1px;height:19px;background:#fff"></div>
<div class="a" style="left:499px;top:800px;width:17px;height:1px;background:#404040"></div>
<div class="a" style="left:515px;top:782px;width:1px;height:19px;background:#404040"></div>
<div class="a" style="left:500px;top:799px;width:15px;height:1px;background:#808080"></div>
<div class="a" style="left:514px;top:783px;width:1px;height:16px;background:#808080"></div>
<div class="a" style="left:516px;top:782px;width:17px;height:1px;background:#fff"></div>
<div class="a" style="left:516px;top:782px;width:1px;height:19px;background:#fff"></div>
<div class="a" style="left:516px;top:800px;width:17px;height:1px;background:#404040"></div>
<div class="a" style="left:532px;top:782px;width:1px;height:19px;background:#404040"></div>
<div class="a" style="left:517px;top:799px;width:15px;height:1px;background:#808080"></div>
<div class="a" style="left:531px;top:783px;width:1px;height:16px;background:#808080"></div>
<div class="a" style="left:533px;top:782px;width:17px;height:1px;background:#fff"></div>
<div class="a" style="left:533px;top:782px;width:1px;height:19px;background:#fff"></div>
<div class="a" style="left:533px;top:800px;width:17px;height:1px;background:#404040"></div>
<div class="a" style="left:549px;top:782px;width:1px;height:19px;background:#404040"></div>
<div class="a" style="left:534px;top:799px;width:15px;height:1px;background:#808080"></div>
<div class="a" style="left:548px;top:783px;width:1px;height:16px;background:#808080"></div>
<div class="a" style="left:550px;top:782px;width:17px;height:1px;background:#fff"></div>
<div class="a" style="left:550px;top:782px;width:1px;height:19px;background:#fff"></div>
<div class="a" style="left:550px;top:800px;width:17px;height:1px;background:#404040"></div>
<div class="a" style="left:566px;top:782px;width:1px;height:19px;background:#404040"></div>
<div class="a" style="left:551px;top:799px;width:15px;height:1px;background:#808080"></div>
<div class="a" style="left:565px;top:783px;width:1px;height:16px;background:#808080"></div>
<div class="a" style="left:567px;top:782px;width:17px;height:1px;background:#fff"></div>
<div class="a" style="left:567px;top:782px;width:1px;height:19px;background:#fff"></div>
<div class="a" style="left:567px;top:800px;width:17px;height:1px;background:#404040"></div>
<div class="a" style="left:583px;top:782px;width:1px;height:19px;background:#404040"></div>
<div class="a" style="left:568px;top:799px;width:15px;height:1px;background:#808080"></div>
<div class="a" style="left:582px;top:783px;width:1px;height:16px;background:#808080"></div>
<div class="a" style="left:584px;top:782px;width:17px;height:1px;background:#fff"></div>
<div class="a" style="left:584px;top:782px;width:1px;height:19px;background:#fff"></div>
<div class="a" style="left:584px;top:800px;width:17px;height:1px;background:#404040"></div>
<div class="a" style="left:600px;top:782px;width:1px;height:19px;background:#404040"></div>
<div class="a" style="left:585px;top:799px;width:15px;height:1px;background:#808080"></div>
<div class="a" style="left:599px;top:783px;width:1px;height:16px;background:#808080"></div>
<div class="a" style="left:601px;top:782px;width:17px;height:1px;background:#fff"></div>
<div class="a" style="left:601px;top:782px;width:1px;height:19px;background:#fff"></div>
<div class="a" style="left:601px;top:800px;width:17px;height:1px;background:#404040"></div>
<div class="a" style="left:617px;top:782px;width:1px;height:19px;background:#404040"></div>
<div class="a" style="left:602px;top:799px;width:15px;height:1px;background:#808080"></div>
<div class="a" style="left:616px;top:783px;width:1px;height:16px;background:#808080"></div>
<div class="a" style="left:618px;top:782px;width:17px;height:1px;background:#fff"></div>
<div class="a" style="left:618px;top:782px;width:1px;height:19px;background:#fff"></div>
<div class="a" style="left:618px;top:800px;width:17px;height:1px;background:#404040"></div>
<div class="a" style="left:634px;top:782px;width:1px;height:19px;background:#404040"></div>
<div class="a" style="left:619px;top:799px;width:15px;height:1px;background:#808080"></div>
<div class="a" style="left:633px;top:783px;width:1px;height:16px;background:#808080"></div>
<div class="a" style="left:635px;top:782px;width:17px;height:1px;background:#fff"></div>
<div class="a" style="left:635px;top:782px;width:1px;height:19px;background:#fff"></div>
<div class="a" style="left:635px;top:800px;width:17px;height:1px;background:#404040"></div>
<div class="a" style="left:651px;top:782px;width:1px;height:19px;background:#404040"></div>
<div class="a" style="left:636px;top:799px;width:15px;height:1px;background:#808080"></div>
<div class="a" style="left:650px;top:783px;width:1px;height:16px;background:#808080"></div>
<div class="a" style="left:652px;top:782px;width:17px;height:1px;background:#fff"></div>
<div class="a" style="left:652px;top:782px;width:1px;height:19px;background:#fff"></div>
<div class="a" style="left:652px;top:800px;width:17px;height:1px;background:#404040"></div>
<div class="a" style="left:668px;top:782px;width:1px;height:19px;background:#404040"></div>
<div class="a" style="left:653px;top:799px;width:15px;height:1px;background:#808080"></div>
<div class="a" style="left:667px;top:783px;width:1px;height:16px;background:#808080"></div>
<div class="a" style="left:720px;top:782px;width:16px;height:1px;background:#fff"></div>
<div class="a" style="left:720px;top:782px;width:1px;height:19px;background:#fff"></div>
<div class="a" style="left:720px;top:800px;width:16px;height:1px;background:#404040"></div>
<div class="a" style="left:735px;top:782px;width:1px;height:19px;background:#404040"></div>
<div class="a" style="left:721px;top:799px;width:14px;height:1px;background:#808080"></div>
<div class="a" style="left:734px;top:783px;width:1px;height:16px;background:#808080"></div>
<div class="a chk" style="left:736px;top:781px;width:520px;height:20px;"></div>
<div class="a" style="left:441px;top:801px;width:815px;height:8px;background:#d4d0c8"></div>
<div class="a" style="left:441px;top:801px;width:815px;height:1px;background:#fff"></div>
<div class="a" style="left:446px;top:805px;width:810px;height:1px;background:#808080"></div>
<div class="a" style="left:446px;top:805px;width:1px;height:4px;background:#808080"></div>
<div class="a" style="left:447px;top:806px;width:1px;height:3px;background:#fff"></div>
<div class="a" style="left:447px;top:806px;width:809px;height:1px;background:#fff"></div>
<div class="a" style="left:139px;top:38px;width:1px;height:22px;background:#808080"></div>
<div class="a" style="left:140px;top:38px;width:1px;height:22px;background:#fff"></div>
<div class="a" style="left:213px;top:38px;width:1px;height:22px;background:#808080"></div>
<div class="a" style="left:214px;top:38px;width:1px;height:22px;background:#fff"></div>
<div class="a" style="left:345px;top:38px;width:1px;height:22px;background:#808080"></div>
<div class="a" style="left:346px;top:38px;width:1px;height:22px;background:#fff"></div>
<div class="a" style="left:373px;top:38px;width:1px;height:22px;background:#808080"></div>
<div class="a" style="left:374px;top:38px;width:1px;height:22px;background:#fff"></div>
<div class="a" style="left:437px;top:38px;width:1px;height:22px;background:#808080"></div>
<div class="a" style="left:438px;top:38px;width:1px;height:22px;background:#fff"></div>
<div class="a" style="left:488px;top:38px;width:1px;height:22px;background:#808080"></div>
<div class="a" style="left:489px;top:38px;width:1px;height:22px;background:#fff"></div>
<div class="a" style="left:573px;top:38px;width:1px;height:22px;background:#808080"></div>
<div class="a" style="left:574px;top:38px;width:1px;height:22px;background:#fff"></div>
<div class="a" style="left:798px;top:38px;width:1px;height:22px;background:#808080"></div>
<div class="a" style="left:799px;top:38px;width:1px;height:22px;background:#fff"></div>
<div class="a chk" style="left:143px;top:38px;width:22px;height:22px;border-top:1px solid #808080;border-left:1px solid #808080;border-bottom:1px solid #fff;border-right:1px solid #fff"></div>
<div class="a chk" style="left:411px;top:38px;width:23px;height:22px;border-top:1px solid #808080;border-left:1px solid #808080;border-bottom:1px solid #fff;border-right:1px solid #fff"></div>
<div class="a" style="left:69px;top:64px;width:1px;height:22px;background:#808080"></div>
<div class="a" style="left:70px;top:64px;width:1px;height:22px;background:#fff"></div>
<div class="a" style="left:145px;top:64px;width:1px;height:22px;background:#808080"></div>
<div class="a" style="left:146px;top:64px;width:1px;height:22px;background:#fff"></div>
<div class="a" style="left:573px;top:38px;width:1px;height:22px;background:#808080"></div>
<div class="a" style="left:574px;top:38px;width:1px;height:22px;background:#fff"></div>
<div class="a" style="left:577px;top:39px;width:1px;height:20px;background:#fff"></div>
<div class="a" style="left:578px;top:39px;width:1px;height:20px;background:#808080"></div>
<div class="a" style="left:579px;top:39px;width:1px;height:20px;background:#fff"></div>
<div class="a" style="left:580px;top:39px;width:1px;height:20px;background:#808080"></div>
<div class="a" style="left:581px;top:39px;width:158px;height:19px;background:#fff"></div>
<div class="a" style="left:581px;top:39px;width:158px;height:1px;background:#808080"></div>
<div class="a" style="left:581px;top:39px;width:1px;height:19px;background:#808080"></div>
<div class="a" style="left:582px;top:40px;width:156px;height:1px;background:#404040"></div>
<div class="a" style="left:582px;top:40px;width:1px;height:17px;background:#404040"></div>
<div class="a" style="left:581px;top:57px;width:158px;height:1px;background:#fff"></div>
<div class="a" style="left:738px;top:39px;width:1px;height:19px;background:#fff"></div>
<div class="a" style="left:582px;top:56px;width:156px;height:1px;background:#d4d0c8"></div>
<div class="a" style="left:737px;top:40px;width:1px;height:17px;background:#d4d0c8"></div>
<div class="a" style="left:723px;top:41px;width:15px;height:15px;background:#d4d0c8"></div>
<div class="a" style="left:723px;top:41px;width:15px;height:1px;background:#fff"></div>
<div class="a" style="left:723px;top:41px;width:1px;height:15px;background:#fff"></div>
<div class="a" style="left:723px;top:55px;width:15px;height:1px;background:#404040"></div>
<div class="a" style="left:737px;top:41px;width:1px;height:15px;background:#404040"></div>
<div class="a" style="left:724px;top:54px;width:13px;height:1px;background:#808080"></div>
<div class="a" style="left:736px;top:42px;width:1px;height:13px;background:#808080"></div>
<div class="a" style="left:803px;top:39px;width:1px;height:20px;background:#fff"></div>
<div class="a" style="left:804px;top:39px;width:1px;height:20px;background:#808080"></div>
<div class="a" style="left:805px;top:39px;width:1px;height:20px;background:#fff"></div>
<div class="a" style="left:806px;top:39px;width:1px;height:20px;background:#808080"></div>
<div class="a" style="left:808px;top:39px;width:452px;height:19px;background:#fff"></div>
<div class="a" style="left:808px;top:39px;width:452px;height:1px;background:#808080"></div>
<div class="a" style="left:808px;top:39px;width:1px;height:19px;background:#808080"></div>
<div class="a" style="left:809px;top:40px;width:450px;height:1px;background:#404040"></div>
<div class="a" style="left:809px;top:40px;width:1px;height:17px;background:#404040"></div>
<div class="a" style="left:808px;top:57px;width:452px;height:1px;background:#fff"></div>
<div class="a" style="left:1259px;top:39px;width:1px;height:19px;background:#fff"></div>
<div class="a" style="left:809px;top:56px;width:450px;height:1px;background:#d4d0c8"></div>
<div class="a" style="left:1258px;top:40px;width:1px;height:17px;background:#d4d0c8"></div><svg id="ov" width="1256" height="809" viewBox="0 0 1256 809"><circle cx="2" cy="2.5" r="5.5" fill="#c8e040" stroke="#2a6a1a" stroke-width="1.5"/><path d="M-1 4q3-4 6-1" stroke="#5a9a1a" stroke-width="1.5" fill="none"/>
<text x="8.5" y="7" font-size="12" fill="#fff" font-weight="bold" style="font-family:'Liberation Mono'" textLength="475" lengthAdjust="spacingAndGlyphs" stroke="#fff" stroke-width="0.9">Toad for Oracle - [ZXFG@ORCL - Schema Browser (ZXFG.TS_IMAGEFILEMB)]</text>
<text x="20" y="29" font-size="11.5" fill="#000" font-weight="normal" style="font-family:'Liberation Mono'" textLength="24" lengthAdjust="spacingAndGlyphs" stroke="#000" stroke-width="0.35">File</text>
<text x="56" y="29" font-size="11.5" fill="#000" font-weight="normal" style="font-family:'Liberation Mono'" textLength="24" lengthAdjust="spacingAndGlyphs" stroke="#000" stroke-width="0.35">Edit</text>
<text x="91" y="29" font-size="11.5" fill="#000" font-weight="normal" style="font-family:'Liberation Mono'" textLength="36" lengthAdjust="spacingAndGlyphs" stroke="#000" stroke-width="0.35">Search</text>
<text x="139" y="29" font-size="11.5" fill="#000" font-weight="normal" style="font-family:'Liberation Mono'" textLength="36" lengthAdjust="spacingAndGlyphs" stroke="#000" stroke-width="0.35">Editor</text>
<text x="187" y="29" font-size="11.5" fill="#000" font-weight="normal" style="font-family:'Liberation Mono'" textLength="42" lengthAdjust="spacingAndGlyphs" stroke="#000" stroke-width="0.35">Session</text>
<text x="242" y="29" font-size="11.5" fill="#000" font-weight="normal" style="font-family:'Liberation Mono'" textLength="48" lengthAdjust="spacingAndGlyphs" stroke="#000" stroke-width="0.35">Database</text>
<text x="302" y="29" font-size="11.5" fill="#000" font-weight="normal" style="font-family:'Liberation Mono'" textLength="30" lengthAdjust="spacingAndGlyphs" stroke="#000" stroke-width="0.35">Debug</text>
<text x="343" y="29" font-size="11.5" fill="#000" font-weight="normal" style="font-family:'Liberation Mono'" textLength="24" lengthAdjust="spacingAndGlyphs" stroke="#000" stroke-width="0.35">View</text>
<text x="380" y="29" font-size="11.5" fill="#000" font-weight="normal" style="font-family:'Liberation Mono'" textLength="54" lengthAdjust="spacingAndGlyphs" stroke="#000" stroke-width="0.35">Utilities</text>
<text x="446" y="29" font-size="11.5" fill="#000" font-weight="normal" style="font-family:'Liberation Mono'" textLength="30" lengthAdjust="spacingAndGlyphs" stroke="#000" stroke-width="0.35">Rerun</text>
<text x="488" y="29" font-size="11.5" fill="#000" font-weight="normal" style="font-family:'Liberation Mono'" textLength="36" lengthAdjust="spacingAndGlyphs" stroke="#000" stroke-width="0.35">Window</text>
<text x="536" y="29" font-size="11.5" fill="#000" font-weight="normal" style="font-family:'Liberation Mono'" textLength="24" lengthAdjust="spacingAndGlyphs" stroke="#000" stroke-width="0.35">Help</text>
<text x="27" y="107" font-size="11" fill="#000" font-weight="normal" style="font-family:'Liberation Sans'" textLength="62" lengthAdjust="spacingAndGlyphs" >ZXFG@ORCL</text>
<text x="25" y="135" font-size="11" fill="#000" font-weight="normal" style="font-family:'Liberation Sans'" textLength="29" lengthAdjust="spacingAndGlyphs" >Editor</text>
<text x="90" y="135" font-size="11" fill="#000" font-weight="normal" style="font-family:'Liberation Sans'" textLength="80" lengthAdjust="spacingAndGlyphs" >Schema Browser</text>
<text x="204" y="135" font-size="11" fill="#000" font-weight="normal" style="font-family:'Liberation Sans'" textLength="80" lengthAdjust="spacingAndGlyphs" >Schema Browser</text>
<text x="320" y="135" font-size="11" fill="#000" font-weight="normal" style="font-family:'Liberation Sans'" textLength="52" lengthAdjust="spacingAndGlyphs" >Alter Table</text>
<text x="408" y="135" font-size="11" fill="#000" font-weight="normal" style="font-family:'Liberation Sans'" textLength="52" lengthAdjust="spacingAndGlyphs" >Alter Table</text>
<text x="495" y="135" font-size="11" fill="#000" font-weight="normal" style="font-family:'Liberation Sans'" textLength="52" lengthAdjust="spacingAndGlyphs" >Alter Table</text>
<text x="0" y="162" font-size="11" fill="#000" font-weight="normal" style="font-family:'Liberation Sans'" textLength="74" lengthAdjust="spacingAndGlyphs" >roject Manager</text>
<path d="M145 154h6v1h-1v4h1v1h-2v3h-1v-3h-2v-1h1v-4h-2z" fill="#000"/>
<path d="M159 155l7 7M166 155l-7 7" stroke="#000" stroke-width="1.1"/>
<path d="M160.5 175.5l3 2.5-3 2.5M164.5 175.5l3 2.5-3 2.5" stroke="#000" fill="none" stroke-width="1.6"/>
<path d="M161.5 187h5l-2.5 3z" fill="#000"/>
<path d="M19.5 182h5l-2.5 3z" fill="#000"/>
<path d="M59.5 182h5l-2.5 3z" fill="#000"/>
<text x="36" y="236" font-size="11" fill="#000" font-weight="normal" style="font-family:'Liberation Sans'" textLength="47" lengthAdjust="spacingAndGlyphs" >Trash can</text>
<text x="36" y="256" font-size="11" fill="#000" font-weight="normal" style="font-family:'Liberation Sans'" textLength="67" lengthAdjust="spacingAndGlyphs" >TOAD project</text>
<path d="M6.5 232.5h9M6.5 232.5v19h10" stroke="#808080" stroke-dasharray="1 1" fill="none" shape-rendering="crispEdges"/>
<text x="178" y="162" font-size="11" fill="#000" font-weight="normal" style="font-family:'Liberation Sans'" textLength="25" lengthAdjust="spacingAndGlyphs" >ZXFG</text>
<text x="178" y="188" font-size="11" fill="#000" font-weight="normal" style="font-family:'Liberation Sans'" textLength="30" lengthAdjust="spacingAndGlyphs" >Tables</text>
<path d="M414 157h7l-3.5 4z" fill="#000"/>
<path d="M414 185h7l-3.5 4z" fill="#000"/>
<text x="219" y="213" font-size="12" fill="#000" font-weight="normal" style="font-family:'Liberation Sans'" >*</text>
<path d="M201.5 209h5l-2.5 3z" fill="#000"/>
<text x="186" y="292" font-size="11" fill="#000" font-weight="normal" style="font-family:'Liberation Sans'" textLength="18" lengthAdjust="spacingAndGlyphs" >Img</text>
<text x="217" y="292" font-size="11" fill="#000" font-weight="normal" style="font-family:'Liberation Sans'" textLength="26" lengthAdjust="spacingAndGlyphs" >Table</text>
<path d="M253.5 285l4 6h-8z" fill="#fff" stroke="#a0a0a0" stroke-width="1"/>
<clipPath id="lc"><rect x="181" y="297" width="227" height="512"/></clipPath><g clip-path="url(#lc)">
<text x="219" y="302" font-size="11" fill="#000" font-weight="normal" style="font-family:'Liberation Sans'" textLength="88.2" lengthAdjust="spacingAndGlyphs" >TB_OTHERREGIST</text>
<text x="219" y="320" font-size="11" fill="#000" font-weight="normal" style="font-family:'Liberation Sans'" textLength="66.5" lengthAdjust="spacingAndGlyphs" >TB_REALINFO</text>
<text x="219" y="338" font-size="11" fill="#000" font-weight="normal" style="font-family:'Liberation Sans'" textLength="58.4" lengthAdjust="spacingAndGlyphs" >TB_RESCAN</text>
<text x="219" y="356" font-size="11" fill="#000" font-weight="normal" style="font-family:'Liberation Sans'" textLength="80.4" lengthAdjust="spacingAndGlyphs" >TB_RWRECLAND</text>
<text x="219" y="374" font-size="11" fill="#000" font-weight="normal" style="font-family:'Liberation Sans'" textLength="97.2" lengthAdjust="spacingAndGlyphs" >TB_RWRECRECEIVE</text>
<text x="219" y="392" font-size="11" fill="#000" font-weight="normal" style="font-family:'Liberation Sans'" textLength="122.1" lengthAdjust="spacingAndGlyphs" >TB_RWRECRECEIVE_BAK</text>
<text x="219" y="410" font-size="11" fill="#000" font-weight="normal" style="font-family:'Liberation Sans'" textLength="64.2" lengthAdjust="spacingAndGlyphs" >TB_RWROOM</text>
<text x="219" y="428" font-size="11" fill="#000" font-weight="normal" style="font-family:'Liberation Sans'" textLength="80.4" lengthAdjust="spacingAndGlyphs" >TB_WORKSPACE</text>
<text x="219" y="446" font-size="11" fill="#000" font-weight="normal" style="font-family:'Liberation Sans'" textLength="60.0" lengthAdjust="spacingAndGlyphs" >TS_BIGTYPE</text>
<text x="219" y="464" font-size="11" fill="#000" font-weight="normal" style="font-family:'Liberation Sans'" textLength="59.0" lengthAdjust="spacingAndGlyphs" >TS_COUNTY</text>
<text x="219" y="482" font-size="11" fill="#000" font-weight="normal" style="font-family:'Liberation Sans'" textLength="106.6" lengthAdjust="spacingAndGlyphs" >TS_CREDENTIALSLIST</text>
<text x="219" y="500" font-size="11" fill="#000" font-weight="normal" style="font-family:'Liberation Sans'" textLength="57.9" lengthAdjust="spacingAndGlyphs" >TS_DAGSET</text>
<text x="219" y="518" font-size="11" fill="#000" font-weight="normal" style="font-family:'Liberation Sans'" textLength="102.2" lengthAdjust="spacingAndGlyphs" >TS_DATADICTIONARY</text>
<text x="219" y="536" font-size="11" fill="#000" font-weight="normal" style="font-family:'Liberation Sans'" textLength="75.9" lengthAdjust="spacingAndGlyphs" >TS_DETAILTYPE</text>
<text x="219" y="554" font-size="11" fill="#000" font-weight="normal" style="font-family:'Liberation Sans'" textLength="55.2" lengthAdjust="spacingAndGlyphs" >TS_FTPSET</text>
<text x="219" y="572" font-size="11" fill="#000" font-weight="normal" style="font-family:'Liberation Sans'" textLength="92.5" lengthAdjust="spacingAndGlyphs" >TS_GETMONEYSET</text>
<text x="219" y="590" font-size="11" fill="#fff" font-weight="normal" style="font-family:'Liberation Sans'" textLength="84.4" lengthAdjust="spacingAndGlyphs" >TS_IMAGEFILEMB</text>
<text x="219" y="608" font-size="11" fill="#000" font-weight="normal" style="font-family:'Liberation Sans'" textLength="67.5" lengthAdjust="spacingAndGlyphs" >TS_KEYTABLE</text>
<text x="219" y="626" font-size="11" fill="#000" font-weight="normal" style="font-family:'Liberation Sans'" textLength="117.7" lengthAdjust="spacingAndGlyphs" >TS_NOHOUSETEMPLATE</text>
<text x="219" y="644" font-size="11" fill="#000" font-weight="normal" style="font-family:'Liberation Sans'" textLength="66.2" lengthAdjust="spacingAndGlyphs" >WA_APPDEPT</text>
<text x="219" y="662" font-size="11" fill="#000" font-weight="normal" style="font-family:'Liberation Sans'" textLength="68.3" lengthAdjust="spacingAndGlyphs" >WA_APPFLOW</text>
<text x="219" y="680" font-size="11" fill="#000" font-weight="normal" style="font-family:'Liberation Sans'" textLength="98.6" lengthAdjust="spacingAndGlyphs" >WA_APPFLOWAPPLY</text>
<text x="219" y="698" font-size="11" fill="#000" font-weight="normal" style="font-family:'Liberation Sans'" textLength="126.2" lengthAdjust="spacingAndGlyphs" >WA_APPFLOWAPPLYBODY</text>
<text x="219" y="716" font-size="11" fill="#000" font-weight="normal" style="font-family:'Liberation Sans'" textLength="122.1" lengthAdjust="spacingAndGlyphs" >WA_APPFLOWAPPROVED</text>
<text x="219" y="734" font-size="11" fill="#000" font-weight="normal" style="font-family:'Liberation Sans'" textLength="144.4" lengthAdjust="spacingAndGlyphs" >WA_APPFLOWNODERELATION</text>
<text x="219" y="752" font-size="11" fill="#000" font-weight="normal" style="font-family:'Liberation Sans'" textLength="103.0" lengthAdjust="spacingAndGlyphs" >WA_APPFLOWNODES</text>
<text x="219" y="770" font-size="11" fill="#000" font-weight="normal" style="font-family:'Liberation Sans'" textLength="166.2" lengthAdjust="spacingAndGlyphs" >WA_APPFLOWNODESBODYGROUP</text>
<text x="219" y="788" font-size="11" fill="#000" font-weight="normal" style="font-family:'Liberation Sans'" textLength="68.9" lengthAdjust="spacingAndGlyphs" >WA_APPMENU</text>
<text x="219" y="806" font-size="11" fill="#000" font-weight="normal" style="font-family:'Liberation Sans'" textLength="66.7" lengthAdjust="spacingAndGlyphs" >WA_APPPOST</text>
</g>
<path d="M412.5 307.5h7l-3.5-4z" fill="#000"/>
<path d="M437 443v6l-3-3z" fill="#0a246a"/><path d="M437 524v6l-3-3z" fill="#0a246a"/>
<path d="M435.5 452v70" stroke="#404080" stroke-dasharray="1 2" stroke-width="1"/>
<path d="M466.5 157h5l-2.5 3z" fill="#000"/>
<path d="M506.5 157h5l-2.5 3z" fill="#000"/>
<path d="M541.5 157h5l-2.5 3z" fill="#a0a0a0"/>
<path d="M707.5 157h5l-2.5 3z" fill="#000"/>
<text x="445" y="189" font-size="11" fill="#000" font-weight="normal" style="font-family:'Liberation Sans'" textLength="90" lengthAdjust="spacingAndGlyphs" >TS_IMAGEFILEMB:</text>
<text x="543.5" y="189" font-size="11" fill="#000" font-weight="normal" style="font-family:'Liberation Sans'" textLength="143" lengthAdjust="spacingAndGlyphs" >Created: 2016/1/21 17:40:06</text>
<text x="695" y="189" font-size="11" fill="#000" font-weight="normal" style="font-family:'Liberation Sans'" textLength="147" lengthAdjust="spacingAndGlyphs" >Last DDL: 2016/1/21 17:40:06</text>
<text x="445" y="206" font-size="11" fill="#000" font-weight="normal" style="font-family:'Liberation Sans'" textLength="107" lengthAdjust="spacingAndGlyphs" >Primary Key:   &lt;none&gt;</text>
<text x="448.7" y="226" font-size="11" fill="#000" font-weight="normal" style="font-family:'Liberation Sans'" textLength="40" lengthAdjust="spacingAndGlyphs" >Columns</text>
<text x="500" y="226" font-size="11" fill="#000" font-weight="normal" style="font-family:'Liberation Sans'" textLength="40" lengthAdjust="spacingAndGlyphs" >Indexes</text>
<text x="551" y="226" font-size="11" fill="#000" font-weight="normal" style="font-family:'Liberation Sans'" textLength="55" lengthAdjust="spacingAndGlyphs" >Constraints</text>
<text x="618" y="226" font-size="11" fill="#000" font-weight="normal" style="font-family:'Liberation Sans'" textLength="39" lengthAdjust="spacingAndGlyphs" >Triggers</text>
<text x="670" y="224" font-size="11" fill="#000" font-weight="normal" style="font-family:'Liberation Sans'" textLength="23" lengthAdjust="spacingAndGlyphs" >Data</text>
<text x="711.7" y="226" font-size="11" fill="#000" font-weight="normal" style="font-family:'Liberation Sans'" textLength="28" lengthAdjust="spacingAndGlyphs" >Script</text>
<text x="753" y="226" font-size="11" fill="#000" font-weight="normal" style="font-family:'Liberation Sans'" textLength="33" lengthAdjust="spacingAndGlyphs" >Grants</text>
<text x="797" y="226" font-size="11" fill="#000" font-weight="normal" style="font-family:'Liberation Sans'" textLength="50" lengthAdjust="spacingAndGlyphs" >Synonyms</text>
<text x="858" y="226" font-size="11" fill="#000" font-weight="normal" style="font-family:'Liberation Sans'" textLength="46" lengthAdjust="spacingAndGlyphs" >Partitions</text>
<text x="915" y="226" font-size="11" fill="#000" font-weight="normal" style="font-family:'Liberation Sans'" textLength="64" lengthAdjust="spacingAndGlyphs" >Subpartitions</text>
<text x="990" y="226" font-size="11" fill="#000" font-weight="normal" style="font-family:'Liberation Sans'" textLength="48" lengthAdjust="spacingAndGlyphs" >Stats/Size</text>
<text x="1050" y="226" font-size="11" fill="#000" font-weight="normal" style="font-family:'Liberation Sans'" textLength="54" lengthAdjust="spacingAndGlyphs" >Referential</text>
<text x="1115" y="226" font-size="11" fill="#000" font-weight="normal" style="font-family:'Liberation Sans'" textLength="39" lengthAdjust="spacingAndGlyphs" >Used By</text>
<text x="1166" y="226" font-size="11" fill="#000" font-weight="normal" style="font-family:'Liberation Sans'" textLength="34" lengthAdjust="spacingAndGlyphs" >Policies</text>
<text x="1212" y="226" font-size="11" fill="#000" font-weight="normal" style="font-family:'Liberation Sans'" textLength="39" lengthAdjust="spacingAndGlyphs" >Auditing</text>
<path d="M473.5 252h5l-2.5 3z" fill="#000"/>
<path d="M553.5 252h5l-2.5 3z" fill="#000"/>
<path d="M831.5 252h5l-2.5 3z" fill="#a0a0a0"/>
<text x="908" y="249" font-size="11" fill="#a0a0a0" font-weight="normal" style="font-family:'Liberation Sans'" textLength="51" lengthAdjust="spacingAndGlyphs" >Sort by PK</text>
<text x="996" y="249" font-size="11" fill="#a0a0a0" font-weight="normal" style="font-family:'Liberation Sans'" textLength="24" lengthAdjust="spacingAndGlyphs" >Desc</text>
<text x="908" y="265" font-size="11" fill="#000" font-weight="normal" style="font-family:'Liberation Sans'" textLength="50" lengthAdjust="spacingAndGlyphs" >Read Only</text>
<text x="996" y="265" font-size="11" fill="#000" font-weight="normal" style="font-family:'Liberation Sans'" textLength="64" lengthAdjust="spacingAndGlyphs" >Auto Refresh</text>
<text x="470" y="292" font-size="12" fill="#000" font-weight="normal" style="font-family:'Liberation Sans'" textLength="11" lengthAdjust="spacingAndGlyphs" >ID</text>
<text x="525" y="292" font-size="12" fill="#000" font-weight="normal" style="font-family:'Liberation Sans'" textLength="42" lengthAdjust="spacingAndGlyphs" >TYPEID</text>
<text x="601" y="292" font-size="12" fill="#000" font-weight="normal" style="font-family:'Liberation Sans'" textLength="46" lengthAdjust="spacingAndGlyphs" >ROWNO</text>
<text x="653" y="292" font-size="12" fill="#000" font-weight="normal" style="font-family:'Liberation Sans'" textLength="57" lengthAdjust="spacingAndGlyphs" >FILENAME</text>
<text x="882" y="292" font-size="12" fill="#000" font-weight="normal" style="font-family:'Liberation Sans'" textLength="64" lengthAdjust="spacingAndGlyphs" >FILECOUNT</text>
<text x="952" y="292" font-size="12" fill="#000" font-weight="normal" style="font-family:'Liberation Sans'" textLength="50" lengthAdjust="spacingAndGlyphs" >BEIZHHU</text>
<text x="1007" y="292" font-size="12" fill="#000" font-weight="normal" style="font-family:'Liberation Sans'" textLength="64" lengthAdjust="spacingAndGlyphs" >BEGINPAGE</text>
<text x="1077" y="292" font-size="12" fill="#000" font-weight="normal" style="font-family:'Liberation Sans'" textLength="53" lengthAdjust="spacingAndGlyphs" >ENDPAGE</text>
<text x="1136" y="292" font-size="12" fill="#000" font-weight="normal" style="font-family:'Liberation Sans'" textLength="44" lengthAdjust="spacingAndGlyphs" >INDATE</text>
<text x="469.5" y="313" font-size="12.5" fill="#000" font-weight="normal" style="font-family:'Liberation Sans'" textLength="49" lengthAdjust="spacingAndGlyphs" >3982924</text>
<text x="525" y="313" font-size="12.5" fill="#000" font-weight="normal" style="font-family:'Liberation Sans'" textLength="69" lengthAdjust="spacingAndGlyphs" >1060070001</text>
<text x="640" y="313" font-size="12.5" fill="#000" font-weight="normal" style="font-family:'Liberation Sans'" textLength="7" lengthAdjust="spacingAndGlyphs" >8</text>
<text x="652" y="312.5" font-size="15" fill="#000" font-weight="300" style="font-family:'Liberation Sans'" textLength="45" lengthAdjust="spacingAndGlyphs" >通知书</text>
<text x="1117" y="313" font-size="12.5" fill="#000" font-weight="normal" style="font-family:'Liberation Sans'" textLength="14" lengthAdjust="spacingAndGlyphs" >82</text>
<text x="469.5" y="334" font-size="12.5" fill="#000" font-weight="normal" style="font-family:'Liberation Sans'" textLength="49" lengthAdjust="spacingAndGlyphs" >3982925</text>
<text x="525" y="334" font-size="12.5" fill="#000" font-weight="normal" style="font-family:'Liberation Sans'" textLength="69" lengthAdjust="spacingAndGlyphs" >1060070001</text>
<text x="640" y="334" font-size="12.5" fill="#000" font-weight="normal" style="font-family:'Liberation Sans'" textLength="7" lengthAdjust="spacingAndGlyphs" >9</text>
<text x="652" y="333.5" font-size="15" fill="#000" font-weight="300" style="font-family:'Liberation Sans'" textLength="105" lengthAdjust="spacingAndGlyphs" >房政业务流程表</text>
<text x="1117" y="334" font-size="12.5" fill="#000" font-weight="normal" style="font-family:'Liberation Sans'" textLength="14" lengthAdjust="spacingAndGlyphs" >83</text>
<text x="469.5" y="355" font-size="12.5" fill="#000" font-weight="normal" style="font-family:'Liberation Sans'" textLength="49" lengthAdjust="spacingAndGlyphs" >1629668</text>
<text x="525" y="355" font-size="12.5" fill="#000" font-weight="normal" style="font-family:'Liberation Sans'" textLength="69" lengthAdjust="spacingAndGlyphs" >1060010058</text>
<text x="640" y="355" font-size="12.5" fill="#000" font-weight="normal" style="font-family:'Liberation Sans'" textLength="7" lengthAdjust="spacingAndGlyphs" >9</text>
<text x="652" y="354.5" font-size="15" fill="#000" font-weight="300" style="font-family:'Liberation Sans'" textLength="90" lengthAdjust="spacingAndGlyphs" >身份证明材料</text>
<text x="1117" y="355" font-size="12.5" fill="#000" font-weight="normal" style="font-family:'Liberation Sans'" textLength="14" lengthAdjust="spacingAndGlyphs" >73</text>
<text x="469.5" y="376" font-size="12.5" fill="#000" font-weight="normal" style="font-family:'Liberation Sans'" textLength="49" lengthAdjust="spacingAndGlyphs" >1629669</text>
<text x="525" y="376" font-size="12.5" fill="#000" font-weight="normal" style="font-family:'Liberation Sans'" textLength="69" lengthAdjust="spacingAndGlyphs" >1060010058</text>
<text x="633" y="376" font-size="12.5" fill="#000" font-weight="normal" style="font-family:'Liberation Sans'" textLength="14" lengthAdjust="spacingAndGlyphs" >10</text>
<text x="652" y="375.5" font-size="15" fill="#000" font-weight="300" style="font-family:'Liberation Sans'" textLength="75" lengthAdjust="spacingAndGlyphs" >缴纳通知单</text>
<text x="1117" y="376" font-size="12.5" fill="#000" font-weight="normal" style="font-family:'Liberation Sans'" textLength="14" lengthAdjust="spacingAndGlyphs" >74</text>
<text x="469.5" y="397" font-size="12.5" fill="#000" font-weight="normal" style="font-family:'Liberation Sans'" textLength="49" lengthAdjust="spacingAndGlyphs" >1629670</text>
<text x="525" y="397" font-size="12.5" fill="#000" font-weight="normal" style="font-family:'Liberation Sans'" textLength="69" lengthAdjust="spacingAndGlyphs" >1060010058</text>
<text x="633" y="397" font-size="12.5" fill="#000" font-weight="normal" style="font-family:'Liberation Sans'" textLength="14" lengthAdjust="spacingAndGlyphs" >11</text>
<text x="652" y="396.5" font-size="15" fill="#000" font-weight="300" style="font-family:'Liberation Sans'" textLength="75" lengthAdjust="spacingAndGlyphs" >房政流程表</text>
<text x="1117" y="397" font-size="12.5" fill="#000" font-weight="normal" style="font-family:'Liberation Sans'" textLength="14" lengthAdjust="spacingAndGlyphs" >75</text>
<text x="469.5" y="418" font-size="12.5" fill="#000" font-weight="normal" style="font-family:'Liberation Sans'" textLength="49" lengthAdjust="spacingAndGlyphs" >3546037</text>
<text x="525" y="418" font-size="12.5" fill="#000" font-weight="normal" style="font-family:'Liberation Sans'" textLength="69" lengthAdjust="spacingAndGlyphs" >1060040065</text>
<text x="640" y="418" font-size="12.5" fill="#000" font-weight="normal" style="font-family:'Liberation Sans'" textLength="7" lengthAdjust="spacingAndGlyphs" >1</text>
<text x="652" y="417.5" font-size="15" fill="#000" font-weight="300" style="font-family:'Liberation Sans'" textLength="180" lengthAdjust="spacingAndGlyphs" >忠县房屋所有权登记申请书</text>
<text x="1124" y="418" font-size="12.5" fill="#000" font-weight="normal" style="font-family:'Liberation Sans'" textLength="7" lengthAdjust="spacingAndGlyphs" >4</text>
<text x="469.5" y="439" font-size="12.5" fill="#000" font-weight="normal" style="font-family:'Liberation Sans'" textLength="49" lengthAdjust="spacingAndGlyphs" >3339247</text>
<text x="525" y="439" font-size="12.5" fill="#000" font-weight="normal" style="font-family:'Liberation Sans'" textLength="69" lengthAdjust="spacingAndGlyphs" >1060070034</text>
<text x="640" y="439" font-size="12.5" fill="#000" font-weight="normal" style="font-family:'Liberation Sans'" textLength="7" lengthAdjust="spacingAndGlyphs" >4</text>
<text x="652" y="438.5" font-size="15" fill="#000" font-weight="300" style="font-family:'Liberation Sans'" textLength="60" lengthAdjust="spacingAndGlyphs" >出让合同</text>
<text x="1117" y="439" font-size="12.5" fill="#000" font-weight="normal" style="font-family:'Liberation Sans'" textLength="14" lengthAdjust="spacingAndGlyphs" >36</text>
<text x="469.5" y="460" font-size="12.5" fill="#000" font-weight="normal" style="font-family:'Liberation Sans'" textLength="49" lengthAdjust="spacingAndGlyphs" >3339248</text>
<text x="525" y="460" font-size="12.5" fill="#000" font-weight="normal" style="font-family:'Liberation Sans'" textLength="69" lengthAdjust="spacingAndGlyphs" >1060070034</text>
<text x="640" y="460" font-size="12.5" fill="#000" font-weight="normal" style="font-family:'Liberation Sans'" textLength="7" lengthAdjust="spacingAndGlyphs" >5</text>
<text x="652" y="459.5" font-size="15" fill="#000" font-weight="300" style="font-family:'Liberation Sans'" textLength="120" lengthAdjust="spacingAndGlyphs" >房屋权属证明材料</text>
<text x="1117" y="460" font-size="12.5" fill="#000" font-weight="normal" style="font-family:'Liberation Sans'" textLength="14" lengthAdjust="spacingAndGlyphs" >45</text>
<text x="476.5" y="481" font-size="12.5" fill="#000" font-weight="normal" style="font-family:'Liberation Sans'" textLength="42" lengthAdjust="spacingAndGlyphs" >568671</text>
<text x="525" y="481" font-size="12.5" fill="#000" font-weight="normal" style="font-family:'Liberation Sans'" textLength="69" lengthAdjust="spacingAndGlyphs" >1060070054</text>
<text x="640" y="481" font-size="12.5" fill="#000" font-weight="normal" style="font-family:'Liberation Sans'" textLength="7" lengthAdjust="spacingAndGlyphs" >1</text>
<text x="652" y="480.5" font-size="15" fill="#000" font-weight="300" style="font-family:'Liberation Sans'" textLength="105" lengthAdjust="spacingAndGlyphs" >业务受理通知书</text>
<text x="1124" y="481" font-size="12.5" fill="#000" font-weight="normal" style="font-family:'Liberation Sans'" textLength="7" lengthAdjust="spacingAndGlyphs" >1</text>
<text x="476.5" y="502" font-size="12.5" fill="#000" font-weight="normal" style="font-family:'Liberation Sans'" textLength="42" lengthAdjust="spacingAndGlyphs" >568672</text>
<text x="525" y="502" font-size="12.5" fill="#000" font-weight="normal" style="font-family:'Liberation Sans'" textLength="69" lengthAdjust="spacingAndGlyphs" >1060070054</text>
<text x="640" y="502" font-size="12.5" fill="#000" font-weight="normal" style="font-family:'Liberation Sans'" textLength="7" lengthAdjust="spacingAndGlyphs" >2</text>
<text x="652" y="501.5" font-size="15" fill="#000" font-weight="300" style="font-family:'Liberation Sans'" textLength="45" lengthAdjust="spacingAndGlyphs" >申请书</text>
<text x="1124" y="502" font-size="12.5" fill="#000" font-weight="normal" style="font-family:'Liberation Sans'" textLength="7" lengthAdjust="spacingAndGlyphs" >3</text>
<text x="476.5" y="523" font-size="12.5" fill="#000" font-weight="normal" style="font-family:'Liberation Sans'" textLength="42" lengthAdjust="spacingAndGlyphs" >568673</text>
<text x="525" y="523" font-size="12.5" fill="#000" font-weight="normal" style="font-family:'Liberation Sans'" textLength="69" lengthAdjust="spacingAndGlyphs" >1060070054</text>
<text x="640" y="523" font-size="12.5" fill="#000" font-weight="normal" style="font-family:'Liberation Sans'" textLength="7" lengthAdjust="spacingAndGlyphs" >3</text>
<text x="652" y="522.5" font-size="15" fill="#000" font-weight="300" style="font-family:'Liberation Sans'" textLength="45" lengthAdjust="spacingAndGlyphs" >审核表</text>
<text x="1124" y="523" font-size="12.5" fill="#000" font-weight="normal" style="font-family:'Liberation Sans'" textLength="7" lengthAdjust="spacingAndGlyphs" >5</text>
<text x="476.5" y="544" font-size="12.5" fill="#000" font-weight="normal" style="font-family:'Liberation Sans'" textLength="42" lengthAdjust="spacingAndGlyphs" >568674</text>
<text x="525" y="544" font-size="12.5" fill="#000" font-weight="normal" style="font-family:'Liberation Sans'" textLength="69" lengthAdjust="spacingAndGlyphs" >1060070054</text>
<text x="640" y="544" font-size="12.5" fill="#000" font-weight="normal" style="font-family:'Liberation Sans'" textLength="7" lengthAdjust="spacingAndGlyphs" >4</text>
<text x="652" y="543.5" font-size="15" fill="#000" font-weight="300" style="font-family:'Liberation Sans'" textLength="60" lengthAdjust="spacingAndGlyphs" >产权证明</text>
<text x="1124" y="544" font-size="12.5" fill="#000" font-weight="normal" style="font-family:'Liberation Sans'" textLength="7" lengthAdjust="spacingAndGlyphs" >6</text>
<text x="476.5" y="565" font-size="12.5" fill="#000" font-weight="normal" style="font-family:'Liberation Sans'" textLength="42" lengthAdjust="spacingAndGlyphs" >568675</text>
<text x="525" y="565" font-size="12.5" fill="#000" font-weight="normal" style="font-family:'Liberation Sans'" textLength="69" lengthAdjust="spacingAndGlyphs" >1060070054</text>
<text x="640" y="565" font-size="12.5" fill="#000" font-weight="normal" style="font-family:'Liberation Sans'" textLength="7" lengthAdjust="spacingAndGlyphs" >5</text>
<text x="652" y="564.5" font-size="15" fill="#000" font-weight="300" style="font-family:'Liberation Sans'" textLength="120" lengthAdjust="spacingAndGlyphs" >房屋权属证明材料</text>
<text x="1117" y="565" font-size="12.5" fill="#000" font-weight="normal" style="font-family:'Liberation Sans'" textLength="14" lengthAdjust="spacingAndGlyphs" >17</text>
<text x="476.5" y="586" font-size="12.5" fill="#000" font-weight="normal" style="font-family:'Liberation Sans'" textLength="42" lengthAdjust="spacingAndGlyphs" >568676</text>
<text x="525" y="586" font-size="12.5" fill="#000" font-weight="normal" style="font-family:'Liberation Sans'" textLength="69" lengthAdjust="spacingAndGlyphs" >1060070054</text>
<text x="640" y="586" font-size="12.5" fill="#000" font-weight="normal" style="font-family:'Liberation Sans'" textLength="7" lengthAdjust="spacingAndGlyphs" >6</text>
<text x="652" y="585.5" font-size="15" fill="#000" font-weight="300" style="font-family:'Liberation Sans'" textLength="30" lengthAdjust="spacingAndGlyphs" >票据</text>
<text x="1117" y="586" font-size="12.5" fill="#000" font-weight="normal" style="font-family:'Liberation Sans'" textLength="14" lengthAdjust="spacingAndGlyphs" >18</text>
<text x="476.5" y="607" font-size="12.5" fill="#000" font-weight="normal" style="font-family:'Liberation Sans'" textLength="42" lengthAdjust="spacingAndGlyphs" >568677</text>
<text x="525" y="607" font-size="12.5" fill="#000" font-weight="normal" style="font-family:'Liberation Sans'" textLength="69" lengthAdjust="spacingAndGlyphs" >1060070054</text>
<text x="640" y="607" font-size="12.5" fill="#000" font-weight="normal" style="font-family:'Liberation Sans'" textLength="7" lengthAdjust="spacingAndGlyphs" >7</text>
<text x="652" y="606.5" font-size="15" fill="#000" font-weight="300" style="font-family:'Liberation Sans'" textLength="90" lengthAdjust="spacingAndGlyphs" >身份证明材料</text>
<text x="1117" y="607" font-size="12.5" fill="#000" font-weight="normal" style="font-family:'Liberation Sans'" textLength="14" lengthAdjust="spacingAndGlyphs" >20</text>
<text x="476.5" y="628" font-size="12.5" fill="#000" font-weight="normal" style="font-family:'Liberation Sans'" textLength="42" lengthAdjust="spacingAndGlyphs" >568678</text>
<text x="525" y="628" font-size="12.5" fill="#000" font-weight="normal" style="font-family:'Liberation Sans'" textLength="69" lengthAdjust="spacingAndGlyphs" >1060070054</text>
<text x="640" y="628" font-size="12.5" fill="#000" font-weight="normal" style="font-family:'Liberation Sans'" textLength="7" lengthAdjust="spacingAndGlyphs" >8</text>
<text x="652" y="627.5" font-size="15" fill="#000" font-weight="300" style="font-family:'Liberation Sans'" textLength="165" lengthAdjust="spacingAndGlyphs" >房地产权属登记询问笔录</text>
<text x="1117" y="628" font-size="12.5" fill="#000" font-weight="normal" style="font-family:'Liberation Sans'" textLength="14" lengthAdjust="spacingAndGlyphs" >21</text>
<text x="469.5" y="649" font-size="12.5" fill="#000" font-weight="normal" style="font-family:'Liberation Sans'" textLength="49" lengthAdjust="spacingAndGlyphs" >3339249</text>
<text x="525" y="649" font-size="12.5" fill="#000" font-weight="normal" style="font-family:'Liberation Sans'" textLength="69" lengthAdjust="spacingAndGlyphs" >1060070034</text>
<text x="640" y="649" font-size="12.5" fill="#000" font-weight="normal" style="font-family:'Liberation Sans'" textLength="7" lengthAdjust="spacingAndGlyphs" >6</text>
<text x="652" y="648.5" font-size="15" fill="#000" font-weight="300" style="font-family:'Liberation Sans'" textLength="30" lengthAdjust="spacingAndGlyphs" >票据</text>
<text x="1117" y="649" font-size="12.5" fill="#000" font-weight="normal" style="font-family:'Liberation Sans'" textLength="14" lengthAdjust="spacingAndGlyphs" >48</text>
<text x="469.5" y="670" font-size="12.5" fill="#000" font-weight="normal" style="font-family:'Liberation Sans'" textLength="49" lengthAdjust="spacingAndGlyphs" >3339250</text>
<text x="525" y="670" font-size="12.5" fill="#000" font-weight="normal" style="font-family:'Liberation Sans'" textLength="69" lengthAdjust="spacingAndGlyphs" >1060070034</text>
<text x="640" y="670" font-size="12.5" fill="#000" font-weight="normal" style="font-family:'Liberation Sans'" textLength="7" lengthAdjust="spacingAndGlyphs" >7</text>
<text x="652" y="669.5" font-size="15" fill="#000" font-weight="300" style="font-family:'Liberation Sans'" textLength="90" lengthAdjust="spacingAndGlyphs" >身份证明材料</text>
<text x="1117" y="670" font-size="12.5" fill="#000" font-weight="normal" style="font-family:'Liberation Sans'" textLength="14" lengthAdjust="spacingAndGlyphs" >49</text>
<text x="469.5" y="691" font-size="12.5" fill="#000" font-weight="normal" style="font-family:'Liberation Sans'" textLength="49" lengthAdjust="spacingAndGlyphs" >3546038</text>
<text x="525" y="691" font-size="12.5" fill="#000" font-weight="normal" style="font-family:'Liberation Sans'" textLength="69" lengthAdjust="spacingAndGlyphs" >1060040065</text>
<text x="640" y="691" font-size="12.5" fill="#000" font-weight="normal" style="font-family:'Liberation Sans'" textLength="7" lengthAdjust="spacingAndGlyphs" >2</text>
<text x="652" y="690.5" font-size="15" fill="#000" font-weight="300" style="font-family:'Liberation Sans'" textLength="180" lengthAdjust="spacingAndGlyphs" >忠县房屋所有权登记审批表</text>
<text x="1124" y="691" font-size="12.5" fill="#000" font-weight="normal" style="font-family:'Liberation Sans'" textLength="7" lengthAdjust="spacingAndGlyphs" >6</text>
<text x="469.5" y="712" font-size="12.5" fill="#000" font-weight="normal" style="font-family:'Liberation Sans'" textLength="49" lengthAdjust="spacingAndGlyphs" >3546039</text>
<text x="525" y="712" font-size="12.5" fill="#000" font-weight="normal" style="font-family:'Liberation Sans'" textLength="69" lengthAdjust="spacingAndGlyphs" >1060040065</text>
<text x="640" y="712" font-size="12.5" fill="#000" font-weight="normal" style="font-family:'Liberation Sans'" textLength="7" lengthAdjust="spacingAndGlyphs" >3</text>
<text x="652" y="711.5" font-size="15" fill="#000" font-weight="300" style="font-family:'Liberation Sans'" textLength="135" lengthAdjust="spacingAndGlyphs" >住房情况分户普查表</text>
<text x="1124" y="712" font-size="12.5" fill="#000" font-weight="normal" style="font-family:'Liberation Sans'" textLength="7" lengthAdjust="spacingAndGlyphs" >8</text>
<text x="469.5" y="733" font-size="12.5" fill="#000" font-weight="normal" style="font-family:'Liberation Sans'" textLength="49" lengthAdjust="spacingAndGlyphs" >3546040</text>
<text x="525" y="733" font-size="12.5" fill="#000" font-weight="normal" style="font-family:'Liberation Sans'" textLength="69" lengthAdjust="spacingAndGlyphs" >1060040065</text>
<text x="640" y="733" font-size="12.5" fill="#000" font-weight="normal" style="font-family:'Liberation Sans'" textLength="7" lengthAdjust="spacingAndGlyphs" >4</text>
<text x="652" y="732.5" font-size="15" fill="#000" font-weight="300" style="font-family:'Liberation Sans'" textLength="165" lengthAdjust="spacingAndGlyphs" >房屋产权登记现场查勘表</text>
<text x="1124" y="733" font-size="12.5" fill="#000" font-weight="normal" style="font-family:'Liberation Sans'" textLength="7" lengthAdjust="spacingAndGlyphs" >9</text>
<text x="469.5" y="754" font-size="12.5" fill="#000" font-weight="normal" style="font-family:'Liberation Sans'" textLength="49" lengthAdjust="spacingAndGlyphs" >3546041</text>
<text x="525" y="754" font-size="12.5" fill="#000" font-weight="normal" style="font-family:'Liberation Sans'" textLength="69" lengthAdjust="spacingAndGlyphs" >1060040065</text>
<text x="640" y="754" font-size="12.5" fill="#000" font-weight="normal" style="font-family:'Liberation Sans'" textLength="7" lengthAdjust="spacingAndGlyphs" >5</text>
<text x="652" y="753.5" font-size="15" fill="#000" font-weight="300" style="font-family:'Liberation Sans'" textLength="90" lengthAdjust="spacingAndGlyphs" >身份证明材料</text>
<text x="1117" y="754" font-size="12.5" fill="#000" font-weight="normal" style="font-family:'Liberation Sans'" textLength="14" lengthAdjust="spacingAndGlyphs" >11</text>
<text x="469.5" y="775" font-size="12.5" fill="#000" font-weight="normal" style="font-family:'Liberation Sans'" textLength="49" lengthAdjust="spacingAndGlyphs" >3546042</text>
<text x="525" y="775" font-size="12.5" fill="#000" font-weight="normal" style="font-family:'Liberation Sans'" textLength="69" lengthAdjust="spacingAndGlyphs" >1060040065</text>
<text x="640" y="775" font-size="12.5" fill="#000" font-weight="normal" style="font-family:'Liberation Sans'" textLength="7" lengthAdjust="spacingAndGlyphs" >6</text>
<text x="652" y="774.5" font-size="15" fill="#000" font-weight="300" style="font-family:'Liberation Sans'" textLength="90" lengthAdjust="spacingAndGlyphs" >集资建房合同</text>
<text x="1117" y="775" font-size="12.5" fill="#000" font-weight="normal" style="font-family:'Liberation Sans'" textLength="14" lengthAdjust="spacingAndGlyphs" >14</text>
<path d="M455 302.5v10l5-5z" fill="#000"/>
<path d="M450 281.5h13M450 283.5h13M450 285.5h13M450 287.5h13M450 289.5h13M450 291.5h13" stroke="#000" stroke-width="1" shape-rendering="crispEdges"/><path d="M452 281v11" stroke="#d4d0c8" shape-rendering="crispEdges"/>
<path d="M729 787v7l-3.5-3.5z" fill="#808080"/>
<g transform="translate(1,41)"><rect x="0.5" y="1.5" width="12" height="14" fill="#fff" stroke="#3c5a8c"/><rect x="1" y="2" width="11" height="3" fill="#b9d3ee"/><path d="M3 8h6M3 10h6M3 12h4" stroke="#808080"/><path d="M4 15l10-10 2 2-10 10z" fill="#f0d040" stroke="#806000" stroke-width="0.8"/><path d="M13 4l2-2 2 2-2 2z" fill="#d03030"/><path d="M3 16l1-2 2 2z" fill="#000"/></g>
<g transform="translate(24,41)"><g fill="#dfe8f4" stroke="#3c5a8c"><rect x="0.5" y="1.5" width="6" height="3"/><rect x="0.5" y="6.5" width="6" height="3"/><rect x="0.5" y="11.5" width="6" height="3"/></g><path d="M7 3h3M7 8h2M7 13h2" stroke="#3c5a8c"/><rect x="9.5" y="3.5" width="6" height="4" fill="#fff" stroke="#3c5a8c"/><path d="M7 6.5q4-2 9 0v8q-4.5 2-9 0z" fill="#f0c830" stroke="#a07800"/><ellipse cx="11.5" cy="7" rx="4" ry="1.2" fill="#f8e080"/></g>
<g transform="translate(47,41)"><rect x="0.5" y="0.5" width="15" height="15" fill="#f4f8fc" stroke="#2f5f9f"/><rect x="1" y="1" width="14" height="2" fill="#5b8ed0"/><rect x="4" y="4" width="8" height="10" fill="#f0d070"/><path d="M2.5 5v6h4M6 9h3" stroke="#707070" fill="none"/><rect x="6" y="8" width="3" height="3" fill="#909090"/></g>
<g transform="translate(70,41)"><rect x="0.5" y="0.5" width="15" height="15" fill="#f4f8fc" stroke="#2f5f9f"/><rect x="1" y="1" width="14" height="2" fill="#5b8ed0"/><path d="M7 5q4-3 6 2l-3 4z" fill="#9ab4e0"/><rect x="12" y="4" width="2" height="2" fill="#fff"/><circle cx="5" cy="10" r="2.2" fill="#e0a070" stroke="#503020" stroke-width="0.8"/><path d="M1.5 15q3.5-4 7 0z" fill="#6080c0"/></g>
<g transform="translate(92,41)"><text x="8" y="5.5" font-size="6.5" font-weight="bold" text-anchor="middle" style="font-family:'Liberation Sans'" fill="#000">SQL</text><path d="M8 16l-5-5q-2-3 1-4q2-1 4 1q2-2 4-1q3 1 1 4z" fill="#40b030"/><path d="M8 8q-2-2-4-1q-3 1-1 4l2 2z" fill="#d03030"/><path d="M8 8q2-2 4-1q3 1 1 4l-2 1z" fill="#f0c020"/></g>
<g transform="translate(116,41)"><rect x="0.5" y="0.5" width="15" height="15" fill="#f4f8fc" stroke="#2f5f9f"/><rect x="1" y="1" width="14" height="2" fill="#5b8ed0"/><rect x="2" y="4" width="4" height="10" fill="#9ab8e0"/><path d="M3 6h2M3 9h2M3 12h2" stroke="#fff"/><path d="M8 6h6M8 9h6M8 12h6" stroke="#808890"/></g>
<g transform="translate(145,41)"><rect x="0.5" y="0.5" width="15" height="15" fill="#f4f8fc" stroke="#2f5f9f"/><rect x="1" y="1" width="14" height="2" fill="#5b8ed0"/><rect x="3" y="5" width="9" height="10" fill="#3a6cb0" stroke="#203860" stroke-width="0.8"/><rect x="5" y="7" width="5" height="6" fill="#6a9ad0"/></g>
<g transform="translate(168,41)"><rect x="0.5" y="0.5" width="15" height="15" fill="#f4f8fc" stroke="#2f5f9f"/><rect x="1" y="1" width="14" height="2" fill="#5b8ed0"/><path d="M3 5h10v6h-6l-3 3v-3h-1z" fill="#fff" stroke="#6a8ab8"/><path d="M5 7h6" stroke="#b0c0d0"/></g>
<g transform="translate(190,41)"><path d="M9 0l-7 9h5l-3 7 9-9h-5l4-7z" fill="#f0d020" stroke="#c08000" stroke-width="0.8"/><path d="M11 10l3-3 1 1-3 3z" fill="#e06020"/></g>
<g transform="translate(219,41)"><path d="M3 0l3 6h-6z" fill="#50b040"/><circle cx="4" cy="11" r="4" fill="#f0c030"/><rect x="6" y="3" width="7" height="7" fill="#f09090" stroke="#c06060" stroke-width="0.6"/><circle cx="9" cy="10" r="3.5" fill="#a0c0f0" stroke="#2050a0"/><path d="M11.5 12.5l3 3" stroke="#804020" stroke-width="1.8"/></g>
<g transform="translate(243,41)"><rect x="0" y="0" width="16" height="16" fill="#2a3e7a"/><path d="M3 16q2-6 6-5t5 5z" fill="#e0e0f0"/><circle cx="7" cy="6" r="4.5" fill="#f0e070" stroke="#000" stroke-width="1.3"/><path d="M9 10l2 4" stroke="#000" stroke-width="1.5"/></g>
<g transform="translate(276,41)"><rect x="0.5" y="0.5" width="15" height="15" fill="#f4f8fc" stroke="#2f5f9f"/><rect x="1" y="1" width="14" height="2" fill="#5b8ed0"/><rect x="4" y="5" width="9" height="9" fill="#cfe0f0" stroke="#5a7ab0"/><path d="M3 6v9h8" stroke="#5a7ab0" fill="none"/></g>
<g transform="translate(310,41)"><rect x="1" y="1" width="8" height="6" fill="#cfe0f8" stroke="#3a6cc0"/><path d="M3 6l4-4M5 2h2v2" stroke="#3a6cc0" fill="none"/><rect x="8" y="9" width="3" height="7" fill="#3060b0"/><path d="M7 7l1 3h3l1-3" fill="none" stroke="#6080b0"/><circle cx="13" cy="9" r="2.8" fill="#f08040"/><rect x="12" y="11" width="2" height="5" fill="#909090"/></g>
<g transform="translate(351,41)"><rect x="0.5" y="0.5" width="15" height="15" fill="#f4f8fc" stroke="#3a7ad0"/><rect x="1" y="1" width="14" height="2" fill="#5b8ed0"/><path d="M2.5 6l1.5 1.5 2.5-3" stroke="#20a020" fill="none" stroke-width="1.2"/><rect x="2.5" y="9.5" width="3" height="2" fill="#fff" stroke="#606060" stroke-width="0.7"/><rect x="2.5" y="12.5" width="3" height="2" fill="#fff" stroke="#606060" stroke-width="0.7"/><rect x="7" y="9" width="2" height="6" fill="#3060b0"/><circle cx="11.5" cy="8" r="2.5" fill="#f08040"/><rect x="11" y="10" width="1.5" height="5" fill="#909090"/></g>
<g transform="translate(380,41)"><text x="8" y="5" font-size="6" font-weight="bold" text-anchor="middle" style="font-family:'Liberation Sans'" fill="#404870" textLength="15" lengthAdjust="spacingAndGlyphs">PLSQL</text><circle cx="8" cy="10.5" r="3.8" fill="#c0c8d0" stroke="#303030" stroke-width="1.1"/><circle cx="8" cy="10" r="1.5" fill="#303030"/><path d="M10.5 13l3 3" stroke="#303030" stroke-width="1.6"/></g>
<g transform="translate(415,41)"><path d="M8 2l7 6-7 6z" fill="#f0e040" stroke="#a0a000" stroke-width="0.7"/><rect x="2" y="4" width="6" height="9" rx="2" fill="#40b030" stroke="#207010" stroke-width="0.7"/></g>
<g transform="translate(442,41)"><path d="M1 9q7-3 14 0v5q-7 3-14 0z" fill="#f0c840" stroke="#a07800" stroke-width="0.8"/><ellipse cx="8" cy="9" rx="7" ry="2" fill="#fff4c0" stroke="#a07800" stroke-width="0.6"/><path d="M5 1h6v4h3l-6 6-6-6h3z" fill="#e03030" stroke="#901010" stroke-width="0.6"/></g>
<g transform="translate(465,41)"><path d="M1 9q7-3 14 0v5q-7 3-14 0z" fill="#f0c840" stroke="#a07800" stroke-width="0.8"/><ellipse cx="8" cy="9" rx="7" ry="2" fill="#fff4c0" stroke="#a07800" stroke-width="0.6"/><path d="M8 0l6 6h-3v4h-6v-4h-3z" fill="#3a80e0" stroke="#1a4090" stroke-width="0.6"/></g>
<g transform="translate(495,41)"><path d="M4 0v7M0.5 3.5h7M1.5 1l5 5M6.5 1l-5 5" stroke="#f0a030" stroke-width="0.9"/><path d="M1 15l5-4" stroke="#c0a020" stroke-width="1.5"/><path d="M7 9q0-3 4-3h2v8h-2q-4 0-4-3z" fill="#a8c0f0" stroke="#3a60b0" stroke-width="0.8"/><path d="M13 8h3M13 12h3" stroke="#3a60b0"/></g>
<g transform="translate(528,41)"><path d="M1 0l6 6M7 0l-6 6" stroke="#0020c0" stroke-width="1.8"/><path d="M1 15l5-4" stroke="#c0a020" stroke-width="1.5"/><path d="M7 9q0-3 4-3h2v8h-2q-4 0-4-3z" fill="#a8c0f0" stroke="#3a60b0" stroke-width="0.8"/><path d="M13 8h3M13 12h3" stroke="#3a60b0"/></g>
<g transform="translate(744,41)"><rect x="1" y="1" width="8" height="7" fill="#cfe0f8" stroke="#5a7ab0" stroke-width="0.8"/><circle cx="5" cy="7" r="2" fill="#f0c040"/><rect x="8" y="9" width="8" height="7" fill="#3a6cc0"/><rect x="10" y="9" width="4" height="3" fill="#fff"/></g>
<g transform="translate(768,41)"><rect x="1" y="1" width="8" height="7" fill="#cfe0f8" stroke="#5a7ab0" stroke-width="0.8"/><circle cx="5" cy="7" r="2" fill="#f0c040"/><path d="M8 8l7 7M15 8l-7 7" stroke="#e02020" stroke-width="2"/></g>
<path d="M265.5 48h5l-2.5 3z" fill="#000"/>
<path d="M299.5 48h5l-2.5 3z" fill="#000"/>
<path d="M333.5 48h5l-2.5 3z" fill="#000"/>
<path d="M402.5 48h5l-2.5 3z" fill="#000"/>
<path d="M517.5 48h5l-2.5 3z" fill="#000"/>
<path d="M551.5 48h5l-2.5 3z" fill="#000"/>
<path d="M562.5 52h5l-2.5 3z" fill="#000"/>
<path d="M789.5 52h5l-2.5 3z" fill="#000"/>
<g transform="translate(1,67)"><circle cx="5.5" cy="5.5" r="4.5" fill="#f0f040" stroke="#000" stroke-width="1.6" stroke-dasharray="1.5 1.2"/><circle cx="5.5" cy="5.5" r="1.6" fill="#fff" stroke="#000"/><path d="M9 1.5q5 0 5.5 5" stroke="#2040c0" fill="none" stroke-width="1.2"/><path d="M13 5l1.5 2.5 1.5-2.5z" fill="#2040c0"/><rect x="8" y="9" width="8" height="7" fill="#000"/><rect x="10" y="9.5" width="4" height="2" fill="#fff"/><rect x="10" y="13" width="4" height="3" fill="#fff"/><rect x="11" y="13.5" width="1.5" height="2.5" fill="#000"/></g>
<g transform="translate(23,67)"><path d="M4.5 3.5h7l2 2v10h-9z" fill="#dcd8d0" stroke="#a8a49c"/><path d="M6 7.5h6M6 9.5h6M6 11.5h6M6 13.5h6" stroke="#a8a49c"/><path d="M1 3q3-4 6 0q-3 3-6 0z" fill="none" stroke="#a8a49c" stroke-width="1.2"/></g>
<g transform="translate(47,67)"><path d="M5.5 2v13M5.5 4.5h3M5.5 9.5h3M5.5 13.5h3M9 2.5h6M9 5.5h6M9 9.5h5M9 13.5h5M1 6.5h3M2.5 5v3" stroke="#a8a49c" stroke-width="1.2"/><circle cx="5.5" cy="3" r="1.5" fill="#a8a49c"/><circle cx="5.5" cy="9.5" r="1.5" fill="#a8a49c"/><circle cx="5.5" cy="14" r="1.5" fill="#a8a49c"/></g>
<g transform="translate(76,67)"><rect x="6.5" y="4.5" width="8" height="11" fill="#dcd8d0" stroke="#a8a49c"/><path d="M8 8h5M8 10h5M8 12h5" stroke="#a8a49c"/><circle cx="5" cy="5" r="3.8" fill="#dcd8d0" stroke="#a8a49c" stroke-width="1.8" stroke-dasharray="2 1"/><circle cx="5" cy="5" r="1.5" fill="none" stroke="#a8a49c"/></g>
<g transform="translate(99,67)"><rect x="1.5" y="1.5" width="5" height="8" fill="none" stroke="#a8a49c"/><rect x="9.5" y="1.5" width="5" height="8" fill="none" stroke="#a8a49c"/><path d="M3 4h2M3 6h2M11 4h2M11 6h2" stroke="#a8a49c"/><path d="M1 13h6M1 13l2-2M1 13l2 2M9 13h6M15 13l-2-2M15 13l-2 2" stroke="#a8a49c" stroke-width="1.2" fill="none"/></g>
<g transform="translate(122,67)"><path d="M1.5 1.5h5l2 2v7h-7z" fill="#dcd8d0" stroke="#a8a49c"/><path d="M6.5 5.5h5l3 3v7h-8z" fill="#dcd8d0" stroke="#a8a49c"/><path d="M3 5h3M3 7h3M8 9h4M8 11h5M8 13h5" stroke="#a8a49c"/></g>
<g transform="translate(151,67)"><path d="M1.5 1.5h6l3 3v10h-9z" fill="#dcd8d0" stroke="#a8a49c" stroke-width="1.2"/><path d="M11 7v8M7 11h8" stroke="#a8a49c" stroke-width="2.5"/><path d="M11 8v6M8 11h6" stroke="#e8e4dc" stroke-width="1"/></g>
<g transform="translate(174,67)"><path d="M1.5 1.5h5l2 2v9h-7z" fill="#dcd8d0" stroke="#a8a49c"/><path d="M3 4v6l2-2-2-2" stroke="#a8a49c" fill="none"/><rect x="7.5" y="7.5" width="8" height="8" fill="#dcd8d0" stroke="#a8a49c"/><rect x="9.5" y="7.5" width="4" height="3" fill="none" stroke="#a8a49c"/><rect x="9" y="12" width="5" height="3.5" fill="#a8a49c"/></g>
<g transform="translate(197,67)"><path d="M1.5 1.5h5l2 2v9h-7z" fill="#dcd8d0" stroke="#a8a49c"/><rect x="7.5" y="7.5" width="8" height="8" fill="#dcd8d0" stroke="#a8a49c"/><rect x="9" y="12" width="5" height="3.5" fill="#a8a49c"/><path d="M10 5q0-3 3-3l2 0M10 5l-1.5-1.5M10 5l1.5-1.5" stroke="#a8a49c" fill="none"/></g>
<g transform="translate(220,67)"><rect x="0.5" y="0.5" width="9" height="8" fill="#dcd8d0" stroke="#a8a49c"/><rect x="2.5" y="0.5" width="5" height="3" fill="none" stroke="#a8a49c"/><rect x="2.5" y="5.5" width="4" height="3" fill="#a8a49c"/><path d="M7.5 6.5h5l3 3v6h-8z" fill="#dcd8d0" stroke="#a8a49c"/><path d="M11.5 9v5M9.5 12l2 2 2-2" stroke="#a8a49c" fill="none"/></g>
<g transform="translate(243,67)"><path d="M1.5 7.5h4l2-2h7v9h-13z" fill="#dcd8d0" stroke="#a8a49c" stroke-width="1.2"/><path d="M5 7l3 3 3-3 3 3M6 5l3-2 3 2" stroke="#a8a49c" fill="none"/><path d="M14 1v6l-3-3z" fill="#a8a49c"/></g>
<g transform="translate(266,67)"><rect x="0.5" y="0.5" width="9" height="9" fill="#dcd8d0" stroke="#a8a49c"/><rect x="2.5" y="0.5" width="5" height="3" fill="none" stroke="#a8a49c"/><rect x="2.5" y="6" width="4" height="3.5" fill="#a8a49c"/><path d="M6.5 8.5h6l2 2v5h-8z" fill="#dcd8d0" stroke="#a8a49c"/><path d="M10 3q4 0 4 4v4" stroke="#a8a49c" fill="none"/></g>
<text x="584" y="53" font-size="11" fill="#000" font-weight="normal" style="font-family:'Liberation Sans'" textLength="127" lengthAdjust="spacingAndGlyphs" >&lt;No Workspace selected&gt;</text>
<path d="M726.5 46h8l-4 4.5z" fill="#000"/>
<text x="811" y="52" font-size="11" fill="#808080" font-weight="normal" style="font-family:'Liberation Sans'" textLength="90" lengthAdjust="spacingAndGlyphs" >Jump to... (Ctrl+J)</text>
<g transform="translate(-1,17)"><g fill="#dfe8f4" stroke="#3c5a8c"><rect x="0.5" y="1.5" width="6" height="3"/><rect x="0.5" y="6.5" width="6" height="3"/><rect x="0.5" y="11.5" width="6" height="3"/></g><path d="M7 3h3M7 8h2M7 13h2" stroke="#3c5a8c"/><rect x="9.5" y="3.5" width="6" height="4" fill="#fff" stroke="#3c5a8c"/><path d="M7 6.5q4-2 9 0v8q-4.5 2-9 0z" fill="#f0c830" stroke="#a07800"/><ellipse cx="11.5" cy="7" rx="4" ry="1.2" fill="#f8e080"/></g>
<g transform="translate(6,95)"><path d="M1 15l5-4" stroke="#c0a020" stroke-width="1.5"/><path d="M7 9q0-3 4-3h2v8h-2q-4 0-4-3z" fill="#a8c0f0" stroke="#3a60b0" stroke-width="0.8"/><path d="M13 8h3M13 12h3" stroke="#3a60b0"/></g>
<rect x="4.5" y="92.5" width="19" height="19" fill="none" stroke="#a0a0a0" stroke-dasharray="1 1" shape-rendering="crispEdges"/>
<g transform="translate(5,123)"><rect x="0.5" y="1.5" width="12" height="14" fill="#fff" stroke="#3c5a8c"/><rect x="1" y="2" width="11" height="3" fill="#b9d3ee"/><path d="M3 8h6M3 10h6M3 12h4" stroke="#808080"/><path d="M4 15l10-10 2 2-10 10z" fill="#f0d040" stroke="#806000" stroke-width="0.8"/><path d="M13 4l2-2 2 2-2 2z" fill="#d03030"/><path d="M3 16l1-2 2 2z" fill="#000"/></g>
<g transform="translate(71,124)"><g fill="#dfe8f4" stroke="#3c5a8c"><rect x="0.5" y="1.5" width="6" height="3"/><rect x="0.5" y="6.5" width="6" height="3"/><rect x="0.5" y="11.5" width="6" height="3"/></g><path d="M7 3h3M7 8h2M7 13h2" stroke="#3c5a8c"/><rect x="9.5" y="3.5" width="6" height="4" fill="#fff" stroke="#3c5a8c"/><path d="M7 6.5q4-2 9 0v8q-4.5 2-9 0z" fill="#f0c830" stroke="#a07800"/><ellipse cx="11.5" cy="7" rx="4" ry="1.2" fill="#f8e080"/></g>
<g transform="translate(185,122)"><g fill="#dfe8f4" stroke="#3c5a8c"><rect x="0.5" y="1.5" width="6" height="3"/><rect x="0.5" y="6.5" width="6" height="3"/><rect x="0.5" y="11.5" width="6" height="3"/></g><path d="M7 3h3M7 8h2M7 13h2" stroke="#3c5a8c"/><rect x="9.5" y="3.5" width="6" height="4" fill="#fff" stroke="#3c5a8c"/><path d="M7 6.5q4-2 9 0v8q-4.5 2-9 0z" fill="#f0c830" stroke="#a07800"/><ellipse cx="11.5" cy="7" rx="4" ry="1.2" fill="#f8e080"/></g>
<g transform="translate(299,122)"><ellipse cx="8" cy="8" rx="7.3" ry="5.5" fill="#e4f088" stroke="#1a7a10" stroke-width="1.3"/><path d="M3 4q5-4 10 0" stroke="#208a10" stroke-width="2.5" fill="none"/><path d="M1.5 8q1-3 3-3M14.5 8q-1-3-3-3" stroke="#30a020" stroke-width="2" fill="none"/><path d="M5 7.5h6M4.5 10.5h7" stroke="#404010" stroke-width="0.8" stroke-dasharray="1 1"/><circle cx="8" cy="2.5" r="1.2" fill="#103010"/></g>
<g transform="translate(386,122)"><ellipse cx="8" cy="8" rx="7.3" ry="5.5" fill="#e4f088" stroke="#1a7a10" stroke-width="1.3"/><path d="M3 4q5-4 10 0" stroke="#208a10" stroke-width="2.5" fill="none"/><path d="M1.5 8q1-3 3-3M14.5 8q-1-3-3-3" stroke="#30a020" stroke-width="2" fill="none"/><path d="M5 7.5h6M4.5 10.5h7" stroke="#404010" stroke-width="0.8" stroke-dasharray="1 1"/><circle cx="8" cy="2.5" r="1.2" fill="#103010"/></g>
<g transform="translate(474,122)"><ellipse cx="8" cy="8" rx="7.3" ry="5.5" fill="#e4f088" stroke="#1a7a10" stroke-width="1.3"/><path d="M3 4q5-4 10 0" stroke="#208a10" stroke-width="2.5" fill="none"/><path d="M1.5 8q1-3 3-3M14.5 8q-1-3-3-3" stroke="#30a020" stroke-width="2" fill="none"/><path d="M5 7.5h6M4.5 10.5h7" stroke="#404010" stroke-width="0.8" stroke-dasharray="1 1"/><circle cx="8" cy="2.5" r="1.2" fill="#103010"/></g>
<g transform="translate(0,176)"><path d="M5.5 0v13M0 6.5h11" stroke="#0000c0" stroke-width="2.2"/></g>
<g transform="translate(37,175)"><path d="M1 3h5l1 2h7v8h-13z" fill="#e8c040" stroke="#a08020" stroke-width="0.8"/><path d="M3 7h13l-2 6h-13z" fill="#f8e070" stroke="#a08020" stroke-width="0.8"/></g>
<g transform="translate(77,175)"><path d="M1 1l3 3M15 1l-3 3M1 15l3-3M15 15l-3-3" stroke="#f0f080" stroke-width="1.5"/><path d="M4 2h6l3 3v10h-9z" fill="#fff" stroke="#000" stroke-width="1.2"/><path d="M10 2v3h3" fill="none" stroke="#000"/></g>
<g transform="translate(100,175)"><rect x="1" y="2" width="13" height="13" fill="#3a50b0" stroke="#202870" stroke-width="0.8"/><rect x="3" y="3" width="9" height="6" fill="#e8eef8"/><rect x="5" y="11" width="5" height="4" fill="#d0d8f0"/><path d="M9 9l6-6 1 1-6 6z" fill="#f0a040" stroke="#805020" stroke-width="0.5"/></g>
<g transform="translate(122,175)"><rect x="4" y="1" width="8" height="5" fill="#f0f0f0" stroke="#a0a0a0" stroke-width="0.8"/><rect x="1" y="6" width="14" height="7" fill="#505050" stroke="#808080" stroke-width="0.8"/><rect x="3" y="12" width="10" height="2" fill="#e04040"/><rect x="6" y="12" width="4" height="2" fill="#40c040"/></g>
<g transform="translate(-1,199)"><rect x="0.5" y="0.5" width="15" height="15" fill="#f4f8fc" stroke="#2f5f9f"/><rect x="1" y="1" width="14" height="2" fill="#5b8ed0"/><rect x="3" y="5" width="9" height="10" fill="#3a6cb0" stroke="#203860" stroke-width="0.8"/><rect x="5" y="7" width="5" height="6" fill="#6a9ad0"/></g>
<g transform="translate(41,201)"><g stroke="#000" stroke-width="1.2"><path d="M2 4q6-4 12 0v8q-6 4-12 0z" fill="#30e0f0"/><path d="M2 6q6 3 12 0M2 9q6 3 12 0" fill="none"/></g></g>
<g transform="translate(17,225)"><path d="M2 3h11v11q-5.5 2-11 0z" fill="#f4f4f8" stroke="#8090a0" stroke-width="0.8"/><ellipse cx="7.5" cy="3" rx="5.5" ry="2" fill="#2040a0"/><path d="M13 3v11" stroke="#10208a" stroke-width="1.2"/></g>
<g transform="translate(17,244)"><rect x="0.5" y="0.5" width="15" height="15" fill="#f4f8fc" stroke="#2f5f9f"/><rect x="1" y="1" width="14" height="2" fill="#5b8ed0"/><rect x="3" y="5" width="9" height="10" fill="#3a6cb0" stroke="#203860" stroke-width="0.8"/><rect x="5" y="7" width="5" height="6" fill="#6a9ad0"/></g>
<g transform="translate(178,201)"><path d="M3 6q5-8 10 0z" fill="#1020b0"/><path d="M1 6h14l-5 6v5h-4v-5z" fill="#f0f0f0" stroke="#000" stroke-width="1.3"/></g>
<g transform="translate(182,237)"><rect x="0.5" y="0.5" width="15" height="15" fill="#f4f8fc" stroke="#2f5f9f"/><rect x="1" y="1" width="14" height="2" fill="#5b8ed0"/><path d="M3 6h10" stroke="#a0a0a0"/><rect x="8" y="9" width="1.5" height="5" fill="#e08040"/><rect x="10" y="8" width="1.5" height="6" fill="#40a040"/><rect x="12" y="10" width="1.5" height="4" fill="#4080c0"/><path d="M3 9h4M3 11h4M3 13h4" stroke="#a0a0a0"/></g>
<g transform="translate(205,237)"><path d="M1 1l3 3M15 1l-3 3M1 15l3-3M15 15l-3-3" stroke="#f0f080" stroke-width="1.5"/><path d="M4 2h6l3 3v10h-9z" fill="#fff" stroke="#000" stroke-width="1.2"/><path d="M10 2v3h3" fill="none" stroke="#000"/></g>
<g transform="translate(228,237)"><path d="M6 1h7l2 2v12h-9z" fill="#fff" stroke="#000"/><path d="M8 5h5M8 8h5M8 11h5" stroke="#000" stroke-dasharray="1 1"/><path d="M0 7h3l3-2 4 1-2 2h2v3h-7l-3-1z" fill="#f0f070" stroke="#203010" stroke-width="0.8"/><path d="M4 1l5 5" stroke="#000"/></g>
<g transform="translate(251,237)"><g stroke="#103030" stroke-width="0.8"><path d="M0 2q4-3 8 0v9q-4 3-8 0z" fill="#30d8e0"/><path d="M0 5q4 2 8 0M0 8q4 2 8 0" fill="none"/></g><path d="M8 7h5l2 2v7h-7z" fill="#fff" stroke="#000" stroke-width="1.2"/><path d="M8 2q4-1 4 4" stroke="#2030a0" fill="none" stroke-width="1.5"/></g>
<g transform="translate(276,237)"><text x="8" y="5.5" font-size="6.5" font-weight="bold" text-anchor="middle" style="font-family:'Liberation Sans'" fill="#000">SQL</text><path d="M8 16l-5-5q-2-3 1-4q2-1 4 1q2-2 4-1q3 1 1 4z" fill="#40b030"/><path d="M8 8q-2-2-4-1q-3 1-1 4l2 2z" fill="#d03030"/><path d="M8 8q2-2 4-1q3 1 1 4l-2 1z" fill="#f0c020"/></g>
<g transform="translate(297,237)"><rect x="0" y="0" width="6" height="6" fill="#2030b0"/><rect x="9" y="5" width="6" height="7" fill="#e04020"/><rect x="1" y="10" width="6" height="6" fill="#30a020"/><path d="M6 2h5v3M10 12v2h-3M3 6v4" stroke="#000" fill="none"/><text x="3" y="5.5" font-size="6" fill="#fff" text-anchor="middle" style="font-family:'Liberation Sans'" font-weight="bold">1</text><text x="12" y="11" font-size="6" fill="#fff" text-anchor="middle" style="font-family:'Liberation Sans'" font-weight="bold">2</text><text x="4" y="15.5" font-size="6" fill="#fff" text-anchor="middle" style="font-family:'Liberation Sans'" font-weight="bold">3</text></g>
<g transform="translate(322,237)"><path d="M3 0h10l-2 6h-6z" fill="#5080d0"/><path d="M8 4l2 4h4l-3 3 1 5-4-3-4 3 1-5-3-3h4z" fill="#f8d050" stroke="#d09020" stroke-width="0.7"/></g>
<g transform="translate(343,237)"><path d="M7 3h6l2 2v11h-8z" fill="#fff" stroke="#000" stroke-width="1.2"/><path d="M9 7h4M9 10h4M9 13h4" stroke="#000"/><path d="M1 14l5-10M5 3l4-1M0 12l3 3" stroke="#000" stroke-width="1.5" fill="none"/></g>
<g transform="translate(367,237)"><rect x="2.5" y="0.5" width="11" height="15" rx="1" fill="#e8e8e8" stroke="#000"/><rect x="4" y="2" width="8" height="3" fill="#203040"/><g fill="#303030"><rect x="4" y="7" width="1.5" height="1.5"/><rect x="7" y="7" width="1.5" height="1.5"/><rect x="10" y="7" width="1.5" height="1.5"/><rect x="4" y="10" width="1.5" height="1.5"/><rect x="7" y="10" width="1.5" height="1.5"/><rect x="10" y="10" width="1.5" height="1.5"/><rect x="4" y="13" width="1.5" height="1.5"/><rect x="7" y="13" width="1.5" height="1.5"/></g><rect x="10" y="13" width="2" height="1.5" fill="#e04040"/></g>
<text x="390" y="248" font-size="11" fill="#000" font-weight="normal" style="font-family:'Liberation Sans'" textLength="14" lengthAdjust="spacingAndGlyphs" >a=b</text>
<g transform="translate(182,259)"><path d="M1 3l5-3 3 3-2 2 6 9-2 2-6-9-2 1z" fill="#806020" stroke="#000" stroke-width="0.8"/><rect x="11" y="1" width="1.5" height="8" fill="#000"/><rect x="10" y="9" width="4" height="7" fill="#e02020"/><circle cx="4" cy="13" r="2.5" fill="none" stroke="#000" stroke-width="1.2"/></g>
<g transform="translate(205,259)"><g fill="#5080c0"><circle cx="8" cy="2" r="2"/><circle cx="13" cy="2" r="2"/><circle cx="9" cy="7" r="1.8"/><circle cx="13" cy="9" r="1.5"/></g><path d="M4 8l6 4-6 4z" fill="#f0d020" stroke="#a08010" stroke-width="0.6"/><path d="M1 8v5" stroke="#404040" stroke-dasharray="1.5 1"/><circle cx="1" cy="15" r="1" fill="none" stroke="#404040" stroke-width="0.7"/></g>
<g transform="translate(229,259)"><path d="M1 4h14l-5 6v5h-4v-5z" fill="#fff" stroke="#000" stroke-width="1.5"/><path d="M3 5h10" stroke="#c0c0c0"/></g>
<g transform="translate(262,259)"><path d="M7 1h6l2 2v10h-8z" fill="#fff" stroke="#000" stroke-width="1.2"/><path d="M9 5h4M9 8h4" stroke="#000" stroke-dasharray="1 1"/><circle cx="3" cy="8" r="2.2" fill="none" stroke="#10208a" stroke-width="1.8"/><circle cx="3" cy="13" r="2.2" fill="none" stroke="#10208a" stroke-width="1.8"/><path d="M5 9l8 7M5 12l5-3" stroke="#000"/></g>
<g transform="translate(285,259)"><path d="M1 8l6-7 4 4-3 7z" fill="#b0c0e8" stroke="#6070a0" stroke-width="0.8"/><path d="M8 7l7 7" stroke="#c08030" stroke-width="2.2"/><path d="M14 13l1.5 1.5" stroke="#000" stroke-width="1.5"/></g>
<path d="M250.5 266h5l-2.5 3z" fill="#000"/>
<g transform="translate(444,151)"><path d="M1 15l5-4" stroke="#c0a020" stroke-width="1.5"/><path d="M7 9q0-3 4-3h2v8h-2q-4 0-4-3z" fill="#a8c0f0" stroke="#3a60b0" stroke-width="0.8"/><path d="M13 8h3M13 12h3" stroke="#3a60b0"/></g>
<path d="M497.5 153v11l-11-5.5z" fill="#0010e0"/><path d="M521 153v11l11-5.5z" fill="#a8a8a8"/>
<g transform="translate(558,151)"><path d="M3.5 6a4.5 4.5 0 0 1 8-2.8M12.5 5a4.5 4.5 0 0 1-8 2.8" stroke="#102080" stroke-width="1.7" fill="none"/><path d="M9.5 0.5l3.5 3-4 1.5z" fill="#102080"/><path d="M6.5 10.5l-3.5-3 4-1.5z" fill="#102080"/><path d="M1.5 14h9M1.5 14l3-2.5M1.5 14l3 2.5" stroke="#90b8e0" stroke-width="1.8" fill="none"/></g>
<g transform="translate(582,151)"><path d="M3.5 6a4.5 4.5 0 0 1 8-2.8M12.5 5a4.5 4.5 0 0 1-8 2.8" stroke="#102080" stroke-width="1.7" fill="none"/><path d="M9.5 0.5l3.5 3-4 1.5z" fill="#102080"/><path d="M6.5 10.5l-3.5-3 4-1.5z" fill="#102080"/><path d="M1.5 14h9M1.5 14l3-2.5M1.5 14l3 2.5" stroke="#90b8e0" stroke-width="1.8" fill="none"/><text x="11" y="16.5" font-size="8" font-weight="bold" fill="#102080" style="font-family:'Liberation Serif'">1</text></g>
<g transform="translate(605,151)"><path d="M3.5 6a4.5 4.5 0 0 1 8-2.8M12.5 5a4.5 4.5 0 0 1-8 2.8" stroke="#102080" stroke-width="1.7" fill="none"/><path d="M9.5 0.5l3.5 3-4 1.5z" fill="#102080"/><path d="M6.5 10.5l-3.5-3 4-1.5z" fill="#102080"/><path d="M5.5 14h9M14.5 14l-3-2.5M14.5 14l-3 2.5" stroke="#90b8e0" stroke-width="1.8" fill="none"/></g>
<g transform="translate(634,150)"><path d="M3 4q5-5 10 0z" fill="#fff" stroke="#000"/><path d="M1 5h14l-5 5v5h-4v-5z" fill="#fff" stroke="#000" stroke-width="1.4"/></g>
<g transform="translate(656,150)"><rect x="1.5" y="2.5" width="12" height="12" fill="#fff" stroke="#606060"/><path d="M14 3v12h-12" stroke="#404040" fill="none"/><g fill="#c02020"><rect x="3" y="4" width="2" height="2"/></g><rect x="3" y="7" width="2" height="2" fill="#2040a0"/><rect x="3" y="10" width="2" height="2" fill="#208040"/><path d="M6 5h6M6 8h6M6 11h6" stroke="#202020"/></g>
<g transform="translate(685,150)"><rect x="0.5" y="0.5" width="15" height="15" fill="#f4f8fc" stroke="#3a7ad0"/><rect x="1" y="1" width="14" height="2" fill="#5b8ed0"/><path d="M2.5 6l1.5 1.5 2.5-3" stroke="#20a020" fill="none" stroke-width="1.2"/><rect x="2.5" y="9.5" width="3" height="2" fill="#fff" stroke="#606060" stroke-width="0.7"/><rect x="2.5" y="12.5" width="3" height="2" fill="#fff" stroke="#606060" stroke-width="0.7"/><rect x="7" y="9" width="2" height="6" fill="#3060b0"/><circle cx="11.5" cy="8" r="2.5" fill="#f08040"/><rect x="11" y="10" width="1.5" height="5" fill="#909090"/></g>
<g transform="translate(451,246)"><path d="M1 4h14l-5 6v5h-4v-5z" fill="#fff" stroke="#000" stroke-width="1.5"/><path d="M3 5h10" stroke="#c0c0c0"/></g>
<g transform="translate(485,245)"><path d="M1 1h5l2 2v6h-7z" fill="#e0eaf8" stroke="#7090c0" stroke-width="0.8"/><path d="M3 4h5l2 2v6h-7z" fill="#e8f0f8" stroke="#7090c0" stroke-width="0.8"/><rect x="8" y="10" width="8" height="5" fill="#707070" stroke="#404040" stroke-width="0.6"/><rect x="10" y="8" width="4" height="2" fill="#e0e0e0"/></g>
<g transform="translate(508,245)"><rect x="0.5" y="0.5" width="15" height="15" fill="#f4f8fc" stroke="#2f5f9f"/><rect x="1" y="1" width="14" height="2" fill="#5b8ed0"/><rect x="2" y="4" width="4" height="10" fill="#9ab8e0"/><path d="M3 6h2M3 9h2M3 12h2" stroke="#fff"/><path d="M8 6h6M8 9h6M8 12h6" stroke="#808890"/></g>
<g transform="translate(531,245)"><g stroke="#103030" stroke-width="0.8"><path d="M0 2q4-3 8 0v9q-4 3-8 0z" fill="#30d8e0"/><path d="M0 5q4 2 8 0M0 8q4 2 8 0" fill="none"/></g><path d="M8 7h5l2 2v7h-7z" fill="#fff" stroke="#000" stroke-width="1.2"/><path d="M8 2q4-1 4 4" stroke="#2030a0" fill="none" stroke-width="1.5"/></g>
<g transform="translate(565,245)"><path d="M2 2l7 7-7 6z" fill="none" stroke="#a8a49c" stroke-width="1.5"/><circle cx="10" cy="10" r="5.5" fill="#cfcbc3" stroke="#a8a49c"/><path d="M6 14l8-8" stroke="#e8e8e8" stroke-width="2"/></g>
<g transform="translate(591,248)"><rect x="0" y="1" width="1.5" height="8" fill="#909090"/><path d="M2 5l8-4.5v9z" fill="#a8a8a8" stroke="#808080" stroke-width="0.6"/></g>
<g transform="translate(614,248)"><path d="M0 5l8-4.5v9z" fill="#a8a8a8" stroke="#808080" stroke-width="0.6"/></g>
<g transform="translate(635,248)"><path d="M8 5l-8-4.5v9z" fill="#2a70d0" stroke="#1040a0" stroke-width="0.6"/></g>
<g transform="translate(656,248)"><path d="M9 5l-9-4.5v9z" fill="#2a70d0" stroke="#1040a0" stroke-width="0.6"/><rect x="10" y="0" width="1.8" height="10" fill="#1a50b0"/></g>
<g transform="translate(678,248)"><path d="M3.5 0h3v3.5h3.5v3h-3.5v3.5h-3v-3.5h-3.5v-3h3.5z" fill="#f06020" stroke="#a03000" stroke-width="0.8"/></g>
<g transform="translate(701,251)"><rect x="0" y="0.5" width="10" height="4" fill="#f06020" stroke="#a03000" stroke-width="0.8"/></g>
<g transform="translate(723,251)"><path d="M5 0l5.5 5h-11z" fill="#30a8c8" stroke="#108098" stroke-width="0.6"/></g>
<g transform="translate(744,249)"><path d="M0 4l3 3 7-6" stroke="#808080" stroke-width="2" fill="none"/></g>
<g transform="translate(768,250)"><path d="M0 0l7 7M7 0l-7 7" stroke="#808080" stroke-width="2"/></g>
<g transform="translate(788,248)"><path d="M2 10q-1-8 7-7" stroke="#1a60c0" stroke-width="2.6" fill="none"/><path d="M8 0l4 3.5-4 3z" fill="#1a60c0"/></g>
<g transform="translate(810,247)"><path d="M10 1h-10l5 6-5 6h11" stroke="#a0a0a0" stroke-width="1.1" fill="none"/></g>
<g transform="translate(842,245)"><path d="M1 9q7-3 14 0v5q-7 3-14 0z" fill="#f0c840" stroke="#a07800" stroke-width="0.8"/><ellipse cx="8" cy="9" rx="7" ry="2" fill="#fff4c0" stroke="#a07800" stroke-width="0.6"/><path d="M5 1h6v4h3l-6 6-6-6h3z" fill="#e03030" stroke="#901010" stroke-width="0.6"/></g>
<g transform="translate(865,245)"><path d="M1 9q7-3 14 0v5q-7 3-14 0z" fill="#f0c840" stroke="#a07800" stroke-width="0.8"/><ellipse cx="8" cy="9" rx="7" ry="2" fill="#fff4c0" stroke="#a07800" stroke-width="0.6"/><path d="M8 0l6 6h-3v4h-6v-4h-3z" fill="#3a80e0" stroke="#1a4090" stroke-width="0.6"/></g>
<g fill="#a8a8a8"><path d="M453 787h1.5v7h-1.5zM455 790.5l3.5-3.5v7zM458.5 790.5l3.5-3.5v7z"/><path d="M472 790.5l3.5-3.5v7zM475.5 790.5l3.5-3.5v7z"/></g>
<g fill="#202020"><path d="M487 787l3.5 3.5-3.5 3.5zM490.5 787l3.5 3.5-3.5 3.5z"/><path d="M504 787l3.5 3.5-3.5 3.5zM507.5 787l3.5 3.5-3.5 3.5zM511 787h1.5v7h-1.5z"/></g>
<path d="M524.5 785v11M519 790.5h11" stroke="#10a010" stroke-width="2.2"/><path d="M536 790.5h10" stroke="#d02020" stroke-width="2"/><path d="M558.5 788l4 4h-8z" fill="#202020"/>
<path d="M571 790l3 3 5-6" stroke="#a8a8a8" stroke-width="2" fill="none"/><path d="M589 787l7 7M596 787l-7 7" stroke="#a8a8a8" stroke-width="1.8"/>
<path d="M605 793q0-5 6-4" stroke="#202020" stroke-width="1.8" fill="none"/><path d="M610 786l3 3-3 3z" fill="#202020"/>
<path d="M626.5 786v9M622 790.5h9M623 787l7 7M630 787l-7 7" stroke="#000" stroke-width="1.2"/><path d="M643.5 787v9M639 791.5h9M640 788l7 7M647 788l-7 7" stroke="#808080" stroke-width="1.2"/><path d="M637 786l2 2" stroke="#404040"/>
<path d="M655 791l6-5 5 4-6 5z" fill="#fff" stroke="#202080" stroke-width="1.3"/>
<g style="font-family:'Liberation Sans'" font-size="37"><text x="994" y="770" fill="#a4a4a4" font-weight="500" textLength="73" lengthAdjust="spacingAndGlyphs">知乎</text><text x="1086" y="770" fill="#a4a4a4" font-weight="500" textLength="139" lengthAdjust="spacingAndGlyphs">@宋国建</text><text x="992.5" y="768.5" fill="#fff" fill-opacity="0.8" font-weight="300" textLength="73" lengthAdjust="spacingAndGlyphs">知乎</text><text x="1084.5" y="768.5" fill="#fff" fill-opacity="0.8" font-weight="300" textLength="139" lengthAdjust="spacingAndGlyphs">@宋国建</text></g></svg></body></html>
